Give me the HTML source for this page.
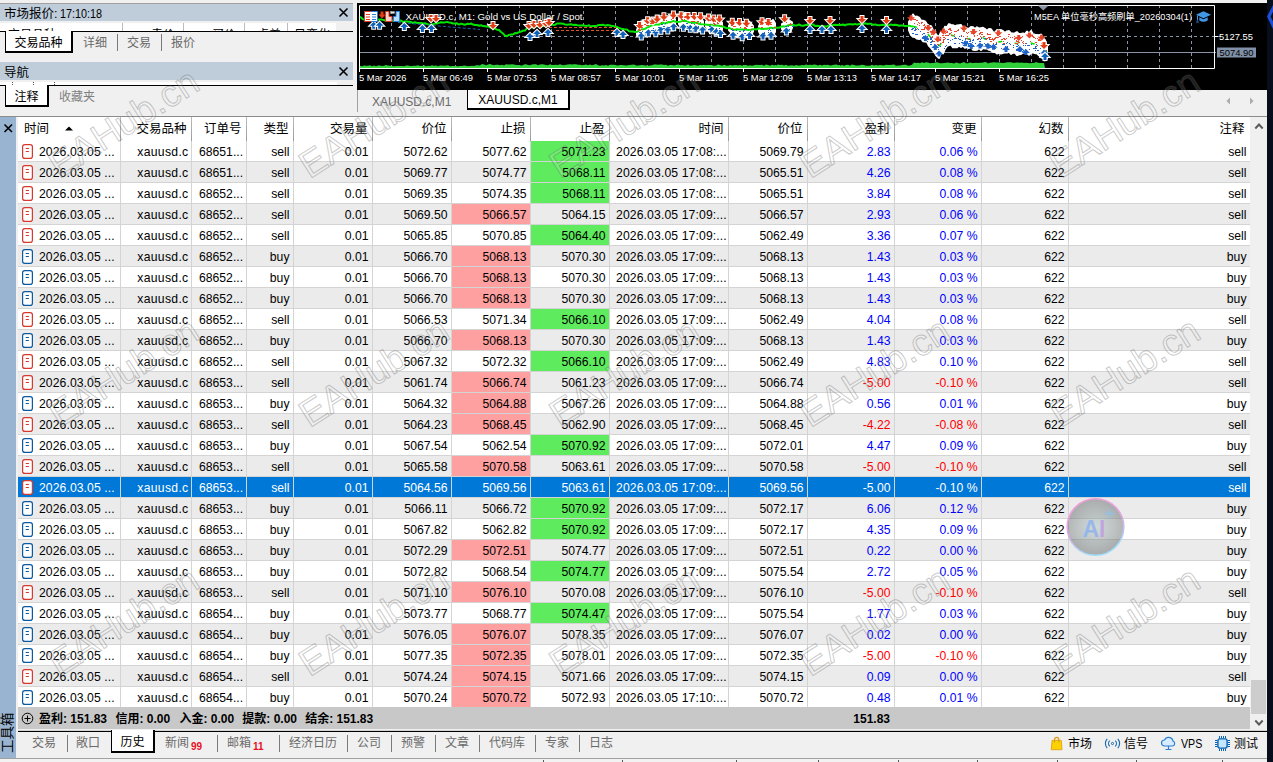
<!DOCTYPE html>
<html lang="zh-CN"><head><meta charset="utf-8"><title>MT5</title>
<style>
*{box-sizing:border-box;margin:0;padding:0}
html,body{width:1273px;height:762px;overflow:hidden;background:#f0f0f0}
body{position:relative;font-family:"Liberation Sans","Noto Sans CJK SC",sans-serif;font-size:12px;color:#000;line-height:1}
.abs{position:absolute}
.t{position:absolute;white-space:nowrap;line-height:20px;height:20px}
.r{text-align:right}
.hd{position:absolute;white-space:nowrap;line-height:22px;height:22px;top:118px;font-size:12.5px}
.row{position:absolute;left:17px;width:1233px;height:21px}
.row .c{position:absolute;top:0;height:20px;line-height:22px;font-size:12.2px;white-space:nowrap;text-align:right;padding-right:3.5px;overflow:hidden}
.row .l{text-align:left;padding-left:0}
.alt{background:#ebebeb}
.sel{background:#0078d7;color:#fff}
.blue{color:#0000ff}.red{color:#ff0000}
.sel .blue,.sel .red{color:#fff}
.g{background:#5eec5e}.rd{background:#ffa0a0}
.vl{position:absolute;width:1px;background:#d4d4d4}
.hl{position:absolute;height:1px;background:#d4d4d4;left:17px;width:1233px}
.tab{position:absolute;color:#6a6a6a;white-space:nowrap;font-size:12px;line-height:16px}
.sep{position:absolute;width:1px;background:#7a7a7a}
.cap{position:absolute;background:#bfcddb;font-size:12.5px;line-height:18px;padding-left:4px;white-space:nowrap}
.nar{display:inline-block;transform:scaleX(.9);transform-origin:left center;font-size:12px}
.x{position:absolute;font-size:12px;font-weight:bold}
.atab{position:absolute;background:#fff;border-left:1px solid #000;border-right:2px solid #000;border-bottom:2px solid #000;color:#000;text-align:center;white-space:nowrap}
</style></head><body>

<div class="abs" style="left:0;top:0;width:1273px;height:3px;background:#f0f0f0"></div>
<div class="abs" style="left:0;top:3px;width:353px;height:1px;background:#a0a0a0"></div>
<div class="cap" style="left:0;top:4px;width:353px;height:17px;line-height:20px">市场报价:<span class="nar">&nbsp;17:10:18</span></div>
<div class="abs" style="left:0;top:23px;width:336px;height:8px;background:#fff;overflow:hidden;font-size:12px;line-height:12px"><div class="abs" style="left:8px;top:6px;white-space:nowrap">交易品种</div><div class="abs" style="right:161px;top:6px;white-space:nowrap">卖价</div><div class="abs" style="right:100px;top:6px;white-space:nowrap">买价</div><div class="abs" style="right:55px;top:6px;white-space:nowrap">点差</div><div class="abs" style="right:6px;top:6px;white-space:nowrap">日变化</div><div class="abs" style="left:122px;top:0;width:1px;height:8px;background:#bdbdbd"></div><div class="abs" style="left:183px;top:0;width:1px;height:8px;background:#bdbdbd"></div><div class="abs" style="left:244px;top:0;width:1px;height:8px;background:#bdbdbd"></div><div class="abs" style="left:287px;top:0;width:1px;height:8px;background:#bdbdbd"></div></div>
<div class="abs" style="left:0;top:31px;width:353px;height:1px;background:#000"></div>
<div class="atab" style="left:5px;top:31px;width:68px;height:22px;line-height:24px;font-size:12px">交易品种</div>
<div class="tab" style="left:83px;top:35px">详细</div><div class="sep" style="left:117px;top:34px;height:17px"></div>
<div class="tab" style="left:127px;top:35px">交易</div><div class="sep" style="left:161px;top:34px;height:17px"></div>
<div class="tab" style="left:171px;top:35px">报价</div>
<div class="cap" style="left:0;top:62px;width:353px;height:18px;line-height:22px">导航</div>
<div class="abs" style="left:0;top:82px;width:337px;height:3px;background:#fff"></div><div class="abs" style="left:12px;top:82px;width:1px;height:1px;background:#555;box-shadow:0 2px 0 #555,21px 0 0 #555,21px 2px 0 #555,42px 0 0 #555,42px 2px 0 #555"></div>
<div class="abs" style="left:0;top:85px;width:353px;height:1px;background:#000"></div>
<div class="atab" style="left:5px;top:85px;width:44px;height:22px;line-height:24px;font-size:12px">注释</div>
<div class="tab" style="left:59px;top:89px;color:#808080">收藏夹</div>
<svg class="abs" style="left:338px;top:7px" width="11" height="11" viewBox="0 0 11 11"><path d="M1.5 1.5 L9.5 9.5 M9.5 1.5 L1.5 9.5" stroke="#000" stroke-width="1.6" fill="none"/></svg>
<svg class="abs" style="left:338px;top:66px" width="11" height="11" viewBox="0 0 11 11"><path d="M1.5 1.5 L9.5 9.5 M9.5 1.5 L1.5 9.5" stroke="#000" stroke-width="1.6" fill="none"/></svg>
<div class="abs" style="left:357px;top:3px;width:910px;height:87px;background:#000"></div>
<svg class="abs" style="left:358px;top:3px" width="909" height="87" viewBox="358 3 909 87" font-family="Liberation Sans, Noto Sans CJK SC, sans-serif">
<path d="M391.5 5 V68" stroke="#8a94a6" stroke-width="1" stroke-dasharray="3 3"/>
<path d="M423.5 5 V68" stroke="#8a94a6" stroke-width="1" stroke-dasharray="3 3"/>
<path d="M455.5 5 V68" stroke="#8a94a6" stroke-width="1" stroke-dasharray="3 3"/>
<path d="M487.5 5 V68" stroke="#8a94a6" stroke-width="1" stroke-dasharray="3 3"/>
<path d="M519.5 5 V68" stroke="#8a94a6" stroke-width="1" stroke-dasharray="3 3"/>
<path d="M551.5 5 V68" stroke="#8a94a6" stroke-width="1" stroke-dasharray="3 3"/>
<path d="M583.5 5 V68" stroke="#8a94a6" stroke-width="1" stroke-dasharray="3 3"/>
<path d="M615.5 5 V68" stroke="#8a94a6" stroke-width="1" stroke-dasharray="3 3"/>
<path d="M647.5 5 V68" stroke="#8a94a6" stroke-width="1" stroke-dasharray="3 3"/>
<path d="M679.5 5 V68" stroke="#8a94a6" stroke-width="1" stroke-dasharray="3 3"/>
<path d="M711.5 5 V68" stroke="#8a94a6" stroke-width="1" stroke-dasharray="3 3"/>
<path d="M743.5 5 V68" stroke="#8a94a6" stroke-width="1" stroke-dasharray="3 3"/>
<path d="M775.5 5 V68" stroke="#8a94a6" stroke-width="1" stroke-dasharray="3 3"/>
<path d="M807.5 5 V68" stroke="#8a94a6" stroke-width="1" stroke-dasharray="3 3"/>
<path d="M839.5 5 V68" stroke="#8a94a6" stroke-width="1" stroke-dasharray="3 3"/>
<path d="M871.5 5 V68" stroke="#8a94a6" stroke-width="1" stroke-dasharray="3 3"/>
<path d="M903.5 5 V68" stroke="#8a94a6" stroke-width="1" stroke-dasharray="3 3"/>
<path d="M935.5 5 V68" stroke="#8a94a6" stroke-width="1" stroke-dasharray="3 3"/>
<path d="M967.5 5 V68" stroke="#8a94a6" stroke-width="1" stroke-dasharray="3 3"/>
<path d="M999.5 5 V68" stroke="#8a94a6" stroke-width="1" stroke-dasharray="3 3"/>
<path d="M1031.5 5 V68" stroke="#8a94a6" stroke-width="1" stroke-dasharray="3 3"/>
<path d="M1063.5 5 V68" stroke="#8a94a6" stroke-width="1" stroke-dasharray="3 3"/>
<path d="M1095.5 5 V68" stroke="#8a94a6" stroke-width="1" stroke-dasharray="3 3"/>
<path d="M1127.5 5 V68" stroke="#8a94a6" stroke-width="1" stroke-dasharray="3 3"/>
<path d="M1159.5 5 V68" stroke="#8a94a6" stroke-width="1" stroke-dasharray="3 3"/>
<path d="M1191.5 5 V68" stroke="#8a94a6" stroke-width="1" stroke-dasharray="3 3"/>
<path d="M360 36.5 H1222" stroke="#8a94a6" stroke-width="1" stroke-dasharray="3 3"/>
<path d="M360 52.5 H1216" stroke="#8a94a6" stroke-width="1"/>
<text x="405.5" y="20" font-size="9.6" fill="#fff" textLength="177" lengthAdjust="spacingAndGlyphs">XAUUSD.c, M1:  Gold vs US Dollar / Spot</text>
<polygon points="637,29.9 639,25.5 641,21.4 643,21.1 645,20.2 647,19.5 649,20.7 651,18.0 653,20.2 655,19.2 657,19.0 659,18.5 661,17.7 663,17.4 665,17.4 667,17.6 669,17.3 671,15.2 673,16.5 675,19.4 675,24.6 673,28.4 671,27.8 669,30.0 667,28.6 665,29.2 663,30.2 661,31.5 659,30.3 657,29.8 655,30.4 653,32.5 651,32.2 649,33.8 647,34.1 645,33.4 643,34.2 641,36.9 639,34.9 637,35.0" fill="#fff" stroke="#fff" stroke-width="2" stroke-linejoin="round"/>
<polygon points="679,18.7 681,14.8 683,14.3 685,12.7 687,13.6 689,14.7 691,16.1 693,17.2 695,15.3 697,17.6 699,15.4 701,17.7 703,21.5 703,26.3 701,28.4 699,31.4 697,28.4 695,28.8 693,27.9 691,27.5 689,28.4 687,29.0 685,27.4 683,28.5 681,26.3 679,24.0" fill="#fff" stroke="#fff" stroke-width="2" stroke-linejoin="round"/>
<polygon points="706,21.6 708,19.3 710,16.5 712,18.3 714,17.2 716,19.8 718,19.9 720,19.7 722,22.7 722,29.8 720,32.2 718,32.9 716,31.0 714,31.7 712,31.1 710,33.3 708,29.2 706,26.5" fill="#fff" stroke="#fff" stroke-width="2" stroke-linejoin="round"/>
<polygon points="729,25.6 731,23.2 733,23.6 735,23.2 737,22.6 739,22.5 741,21.9 743,23.7 745,24.2 747,22.3 749,21.5 751,23.6 753,26.1 753,31.4 751,35.4 749,37.6 747,34.7 745,37.2 743,38.3 741,36.3 739,37.3 737,37.1 735,36.1 733,34.8 731,32.4 729,30.1" fill="#fff" stroke="#fff" stroke-width="2" stroke-linejoin="round"/>
<polygon points="759,26.1 761,22.3 763,20.7 765,20.3 767,20.9 769,23.1 771,21.8 773,19.9 775,23.3 775,31.9 773,34.8 771,33.4 769,33.7 767,34.1 765,35.8 763,35.6 761,34.9 759,31.5" fill="#fff" stroke="#fff" stroke-width="2" stroke-linejoin="round"/>
<polygon points="782,24.1 784,23.0 786,19.3 788,19.6 790,21.1 792,22.3 792,27.8 790,32.0 788,31.8 786,31.6 784,31.7 782,28.9" fill="#fff" stroke="#fff" stroke-width="2" stroke-linejoin="round"/>
<polygon points="909,21.9 911,18.7 913,14.5 915,17.0 917,16.6 919,17.7 921,20.5 923,20.7 925,21.4 927,24.5 929,25.6 931,26.1 933,30.5 935,32.9 937,35.6 939,36.8 941,32.2 943,31.9 945,26.8 947,27.2 949,24.1 951,25.0 953,25.2 955,26.5 957,25.5 959,25.2 961,25.0 963,28.5 965,27.4 967,28.5 969,28.8 971,27.0 973,27.2 975,29.3 977,27.2 979,28.6 981,28.2 983,27.8 985,29.0 987,31.0 989,28.9 991,29.2 993,32.2 995,32.8 997,30.0 999,30.5 1001,30.0 1003,31.2 1005,32.9 1007,31.4 1009,31.1 1011,33.5 1013,33.6 1015,33.1 1017,32.1 1019,34.1 1021,33.9 1023,33.5 1025,34.2 1027,31.5 1029,33.8 1031,31.1 1033,34.2 1035,34.7 1037,35.0 1039,35.3 1041,34.6 1043,38.3 1045,40.2 1047,47.0 1047,58.1 1045,60.4 1043,58.1 1041,57.4 1039,55.2 1037,53.2 1035,53.2 1033,52.3 1031,53.1 1029,54.8 1027,53.4 1025,52.5 1023,52.4 1021,53.9 1019,54.3 1017,55.1 1015,52.4 1013,52.7 1011,53.9 1009,51.3 1007,52.6 1005,52.6 1003,52.7 1001,53.5 999,52.5 997,53.5 995,51.8 993,52.0 991,50.4 989,49.8 987,48.5 985,48.5 983,48.1 981,50.0 979,47.9 977,49.8 975,50.0 973,49.8 971,46.9 969,48.1 967,47.0 965,47.7 963,45.6 961,46.9 959,45.5 957,47.3 955,46.9 953,47.3 951,44.5 949,45.1 947,45.9 945,48.7 943,53.4 941,52.6 939,57.9 937,56.1 935,53.1 933,50.3 931,47.9 929,45.9 927,41.7 925,41.5 923,41.2 921,38.2 919,39.1 917,38.6 915,37.0 913,36.7 911,34.9 909,30.1" fill="#fff" stroke="#fff" stroke-width="2" stroke-linejoin="round"/>
<polyline points="359,16.8 361,17.5 363,19.2 365,19.4 367,20.1 369,19.8 371,19.4 373,20.0 375,19.4 377,19.9 379,19.4 381,19.4 383,19.9 385,20.5 387,19.5 389,19.6 391,20.2 393,20.8 395,20.4 397,20.3 399,21.4 401,20.5 403,22.0 405,21.5 407,21.5 409,21.7 411,22.1 413,23.0 415,22.2 417,22.9 419,23.1 421,22.9 423,23.4 425,23.3 427,24.0 429,24.5 431,24.9 433,24.2 435,23.6 437,23.5 439,22.9 441,22.3 443,22.6 445,22.4 447,21.9 449,22.5 451,22.7 453,23.5 455,23.6 457,23.3 459,24.6 461,23.6 463,24.3 465,24.8 467,23.8 469,24.1 471,23.5 473,24.6 475,25.0 477,25.0 479,25.7 481,25.2 483,26.1 485,26.3 487,26.6 489,26.8 491,27.8 493,28.6 495,28.6 497,29.7 499,29.9 501,32.0 503,33.5 505,35.7 507,36.2 509,34.9 511,34.6 513,34.5 515,33.1 517,33.2 519,32.2 521,31.5 523,30.7 525,30.6 527,28.2 529,27.4 531,27.1 533,27.4 535,26.0 537,26.3 539,26.2 541,26.4 543,26.1 545,25.9 547,24.8 549,24.8 551,24.4 553,24.9 555,24.8 557,23.5 559,23.5 561,23.6 563,23.8 565,24.4 567,24.7 569,24.5 571,24.3 573,24.9 575,24.8 577,25.1 579,25.6 581,25.4 583,25.3 585,25.7 587,25.9 589,25.3 591,26.5 593,26.1 595,26.0 597,25.7 599,24.9 601,25.0 603,24.7 605,25.7 607,25.1 609,25.3 611,25.8 613,26.0 615,26.6 617,26.9 619,27.8 621,28.7 623,28.9 625,29.6 627,29.6 629,31.3 631,31.5 633,31.6 635,32.0 637,31.8 639,30.5 641,29.1 643,29.4 645,28.9 647,27.5 649,26.9 651,25.7 653,25.1 655,24.8 657,24.3 659,24.7 661,23.3 663,22.7 665,23.6 667,22.7 669,21.9 671,22.2 673,21.1 675,21.5 677,22.1 679,21.8 681,21.4 683,20.7 685,21.0 687,21.1 689,22.3 691,22.4 693,23.0 695,22.6 697,22.7 699,23.8 701,24.3 703,24.4 705,24.6 707,24.8 709,25.0 711,24.7 713,25.5 715,25.6 717,25.5 719,25.7 721,26.3 723,26.5 725,27.5 727,28.2 729,27.9 731,28.9 733,29.4 735,29.7 737,29.2 739,29.4 741,29.6 743,29.4 745,29.3 747,29.7 749,30.0 751,29.8 753,29.2 755,29.3 757,29.4 759,28.2 761,28.9 763,29.1 765,28.8 767,28.7 769,28.2 771,27.6 773,28.3 775,27.4 777,27.8 779,27.8 781,26.7 783,26.3 785,26.7 787,26.0 789,25.0 791,24.8 793,24.7 795,25.6 797,25.4 799,24.5 801,25.5 803,25.7 805,25.2 807,24.8 809,25.1 811,24.5 813,24.4 815,26.0 817,25.8 819,25.9 821,26.6 823,25.9 825,26.5 827,26.5 829,25.5 831,25.3 833,25.1 835,24.8 837,25.1 839,24.7 841,24.9 843,24.5 845,25.4 847,24.4 849,24.3 851,24.2 853,24.6 855,23.9 857,24.6 859,24.0 861,24.0 863,24.0 865,23.3 867,23.9 869,23.7 871,23.7 873,25.0 875,24.4 877,25.0 879,25.3 881,25.1 883,24.8 885,25.0 887,25.1 889,25.4 891,24.4 893,25.1 895,24.8 897,25.0 899,25.8 901,25.5 903,25.6 905,25.9 907,26.1 909,25.6 911,26.2 913,26.4" fill="none" stroke="#00e400" stroke-width="2" stroke-linejoin="round"/>
<polyline points="913,26.4 915,26.8 917,27.7 919,28.3 921,29.3 923,30.1 925,31.6 927,33.3 929,35.5 931,37.6 933,39.7 935,43.1 937,45.1 939,46.5 941,43.5 943,41.5 945,38.6 947,36.0 949,35.5 951,34.9 953,35.7 955,35.9 957,36.3 959,35.7 961,37.0 963,37.3 965,37.1 967,38.6 969,39.2 971,38.0 973,39.0 975,38.1 977,38.2 979,38.8 981,38.5 983,37.9 985,38.9 987,39.7 989,40.1 991,40.6 993,41.4 995,42.3 997,41.2 999,41.9 1001,41.6 1003,41.0 1005,41.3 1007,41.7 1009,41.9 1011,41.6 1013,43.2 1015,43.2 1017,43.8 1019,42.9 1021,43.1 1023,42.7 1025,43.7 1027,42.9 1029,42.6 1031,42.9 1033,43.7 1035,43.9 1037,43.5 1039,44.3 1041,46.8 1043,48.3 1045,50.9 1047,52.3" fill="none" stroke="#00e400" stroke-width="1.6" stroke-dasharray="4 13" stroke-linejoin="round"/>
<path d="M398 22.5 L480 29.5" stroke="#1f5fb0" stroke-width="1" stroke-dasharray="3 2"/>
<path d="M549 27.5 H616" stroke="#e0522a" stroke-width="1" stroke-dasharray="3 2"/>
<path d="M556 30.5 H614" stroke="#e0522a" stroke-width="1" stroke-dasharray="3 2"/>
<path d="M372.2 28.7 h3 v-3 h2.5 l-4 -4 l-4 4 h2.5 z" fill="#1060b8" stroke="#fff" stroke-width="2" paint-order="stroke"/>
<path d="M378.1 28.7 h3 v-3 h2.5 l-4 -4 l-4 4 h2.5 z" fill="#1060b8" stroke="#fff" stroke-width="2" paint-order="stroke"/>
<path d="M402.8 30.0 h3 v-3 h2.5 l-4 -4 l-4 4 h2.5 z" fill="#1060b8" stroke="#fff" stroke-width="2" paint-order="stroke"/>
<path d="M420.9 32.0 h3 v-3 h2.5 l-4 -4 l-4 4 h2.5 z" fill="#1060b8" stroke="#fff" stroke-width="2" paint-order="stroke"/>
<path d="M429.9 32.0 h3 v-3 h2.5 l-4 -4 l-4 4 h2.5 z" fill="#1060b8" stroke="#fff" stroke-width="2" paint-order="stroke"/>
<path d="M429.5 15.0 h3 v3 h2.5 l-4 4 l-4 -4 h2.5 z" fill="#e23c14" stroke="#fff" stroke-width="2" paint-order="stroke"/>
<path d="M434.5 15.0 h3 v3 h2.5 l-4 4 l-4 -4 h2.5 z" fill="#e23c14" stroke="#fff" stroke-width="2" paint-order="stroke"/>
<path d="M491.5 22.0 h3 v3 h2.5 l-4 4 l-4 -4 h2.5 z" fill="#e23c14" stroke="#fff" stroke-width="2" paint-order="stroke"/>
<path d="M527.5 22.0 h3 v3 h2.5 l-4 4 l-4 -4 h2.5 z" fill="#e23c14" stroke="#fff" stroke-width="2" paint-order="stroke"/>
<path d="M532.5 21.0 h3 v3 h2.5 l-4 4 l-4 -4 h2.5 z" fill="#e23c14" stroke="#fff" stroke-width="2" paint-order="stroke"/>
<path d="M538.5 21.0 h3 v3 h2.5 l-4 4 l-4 -4 h2.5 z" fill="#e23c14" stroke="#fff" stroke-width="2" paint-order="stroke"/>
<path d="M544.5 20.0 h3 v3 h2.5 l-4 4 l-4 -4 h2.5 z" fill="#e23c14" stroke="#fff" stroke-width="2" paint-order="stroke"/>
<path d="M547.5 19.0 h3 v3 h2.5 l-4 4 l-4 -4 h2.5 z" fill="#e23c14" stroke="#fff" stroke-width="2" paint-order="stroke"/>
<path d="M528.5 40.0 h3 v-3 h2.5 l-4 -4 l-4 4 h2.5 z" fill="#1060b8" stroke="#fff" stroke-width="2" paint-order="stroke"/>
<path d="M535.5 37.0 h3 v-3 h2.5 l-4 -4 l-4 4 h2.5 z" fill="#1060b8" stroke="#fff" stroke-width="2" paint-order="stroke"/>
<path d="M546.5 36.0 h3 v-3 h2.5 l-4 -4 l-4 4 h2.5 z" fill="#1060b8" stroke="#fff" stroke-width="2" paint-order="stroke"/>
<path d="M615.5 36.0 h3 v-3 h2.5 l-4 -4 l-4 4 h2.5 z" fill="#1060b8" stroke="#fff" stroke-width="2" paint-order="stroke"/>
<path d="M621.5 38.0 h3 v-3 h2.5 l-4 -4 l-4 4 h2.5 z" fill="#1060b8" stroke="#fff" stroke-width="2" paint-order="stroke"/>
<path d="M638.1 21.9 h3 v3 h2.5 l-4 4 l-4 -4 h2.5 z" fill="#e23c14" stroke="#fff" stroke-width="2" paint-order="stroke"/>
<path d="M639.8 39.5 h3 v-3 h2.5 l-4 -4 l-4 4 h2.5 z" fill="#1060b8" stroke="#fff" stroke-width="2" paint-order="stroke"/>
<path d="M646.1 17.2 h3 v3 h2.5 l-4 4 l-4 -4 h2.5 z" fill="#e23c14" stroke="#fff" stroke-width="2" paint-order="stroke"/>
<path d="M646.9 36.3 h3 v-3 h2.5 l-4 -4 l-4 4 h2.5 z" fill="#1060b8" stroke="#fff" stroke-width="2" paint-order="stroke"/>
<path d="M651.5 17.5 h3 v3 h2.5 l-4 4 l-4 -4 h2.5 z" fill="#e23c14" stroke="#fff" stroke-width="2" paint-order="stroke"/>
<path d="M654.3 36.2 h3 v-3 h2.5 l-4 -4 l-4 4 h2.5 z" fill="#1060b8" stroke="#fff" stroke-width="2" paint-order="stroke"/>
<path d="M655.7 15.5 h3 v3 h2.5 l-4 4 l-4 -4 h2.5 z" fill="#e23c14" stroke="#fff" stroke-width="2" paint-order="stroke"/>
<path d="M659.4 33.8 h3 v-3 h2.5 l-4 -4 l-4 4 h2.5 z" fill="#1060b8" stroke="#fff" stroke-width="2" paint-order="stroke"/>
<path d="M662.4 13.2 h3 v3 h2.5 l-4 4 l-4 -4 h2.5 z" fill="#e23c14" stroke="#fff" stroke-width="2" paint-order="stroke"/>
<path d="M666.3 33.5 h3 v-3 h2.5 l-4 -4 l-4 4 h2.5 z" fill="#1060b8" stroke="#fff" stroke-width="2" paint-order="stroke"/>
<path d="M671.9 11.6 h3 v3 h2.5 l-4 4 l-4 -4 h2.5 z" fill="#e23c14" stroke="#fff" stroke-width="2" paint-order="stroke"/>
<path d="M672.2 30.3 h3 v-3 h2.5 l-4 -4 l-4 4 h2.5 z" fill="#1060b8" stroke="#fff" stroke-width="2" paint-order="stroke"/>
<rect x="663" y="28" width="2" height="1" fill="#1e64c8"/>
<rect x="641" y="32" width="1" height="1" fill="#1e64c8"/>
<rect x="666" y="20" width="1" height="1" fill="#e8452a"/>
<rect x="661" y="22" width="1" height="1" fill="#e8452a"/>
<rect x="661" y="24" width="2" height="1" fill="#1e64c8"/>
<rect x="663" y="19" width="1" height="1" fill="#e8452a"/>
<rect x="649" y="31" width="1" height="1" fill="#1e64c8"/>
<rect x="652" y="23" width="1" height="1" fill="#e8452a"/>
<rect x="638" y="29" width="2" height="1" fill="#e8452a"/>
<rect x="648" y="25" width="1" height="1" fill="#e8452a"/>
<rect x="655" y="22" width="1" height="1" fill="#e8452a"/>
<rect x="639" y="30" width="2" height="1" fill="#e8452a"/>
<rect x="640" y="27" width="2" height="1" fill="#e8452a"/>
<rect x="641" y="27" width="2" height="1" fill="#e8452a"/>
<rect x="671" y="19" width="1" height="1" fill="#e8452a"/>
<rect x="663" y="26" width="2" height="1" fill="#1e64c8"/>
<rect x="663" y="20" width="2" height="1" fill="#e8452a"/>
<rect x="665" y="23" width="1" height="1" fill="#1e64c8"/>
<rect x="656" y="22" width="1" height="1" fill="#e8452a"/>
<rect x="646" y="25" width="2" height="1" fill="#e8452a"/>
<rect x="642" y="31" width="1" height="1" fill="#1e64c8"/>
<rect x="670" y="22" width="1" height="1" fill="#e8452a"/>
<rect x="672" y="18" width="2" height="1" fill="#e8452a"/>
<rect x="640" y="25" width="1" height="1" fill="#e8452a"/>
<rect x="653" y="28" width="1" height="1" fill="#1e64c8"/>
<rect x="652" y="30" width="2" height="1" fill="#1e64c8"/>
<rect x="664" y="28" width="1" height="1" fill="#1e64c8"/>
<rect x="650" y="23" width="2" height="1" fill="#e8452a"/>
<rect x="639" y="32" width="2" height="1" fill="#1e64c8"/>
<rect x="668" y="27" width="2" height="1" fill="#1e64c8"/>
<rect x="644" y="24" width="2" height="1" fill="#e8452a"/>
<rect x="641" y="29" width="1" height="1" fill="#e8452a"/>
<rect x="658" y="27" width="2" height="1" fill="#1e64c8"/>
<rect x="651" y="30" width="2" height="1" fill="#1e64c8"/>
<path d="M679.7 12.2 h3 v3 h2.5 l-4 4 l-4 -4 h2.5 z" fill="#e23c14" stroke="#fff" stroke-width="2" paint-order="stroke"/>
<path d="M681.9 30.7 h3 v-3 h2.5 l-4 -4 l-4 4 h2.5 z" fill="#1060b8" stroke="#fff" stroke-width="2" paint-order="stroke"/>
<path d="M686.5 13.0 h3 v3 h2.5 l-4 4 l-4 -4 h2.5 z" fill="#e23c14" stroke="#fff" stroke-width="2" paint-order="stroke"/>
<path d="M688.8 31.7 h3 v-3 h2.5 l-4 -4 l-4 4 h2.5 z" fill="#1060b8" stroke="#fff" stroke-width="2" paint-order="stroke"/>
<path d="M692.8 13.0 h3 v3 h2.5 l-4 4 l-4 -4 h2.5 z" fill="#e23c14" stroke="#fff" stroke-width="2" paint-order="stroke"/>
<path d="M694.3 32.2 h3 v-3 h2.5 l-4 -4 l-4 4 h2.5 z" fill="#1060b8" stroke="#fff" stroke-width="2" paint-order="stroke"/>
<path d="M699.1 13.3 h3 v3 h2.5 l-4 4 l-4 -4 h2.5 z" fill="#e23c14" stroke="#fff" stroke-width="2" paint-order="stroke"/>
<path d="M701.1 33.5 h3 v-3 h2.5 l-4 -4 l-4 4 h2.5 z" fill="#1060b8" stroke="#fff" stroke-width="2" paint-order="stroke"/>
<rect x="687" y="26" width="1" height="1" fill="#1e64c8"/>
<rect x="686" y="23" width="2" height="1" fill="#1e64c8"/>
<rect x="700" y="22" width="1" height="1" fill="#e8452a"/>
<rect x="681" y="19" width="2" height="1" fill="#e8452a"/>
<rect x="696" y="23" width="2" height="1" fill="#e8452a"/>
<rect x="697" y="27" width="2" height="1" fill="#1e64c8"/>
<rect x="683" y="21" width="1" height="1" fill="#e8452a"/>
<rect x="698" y="26" width="1" height="1" fill="#1e64c8"/>
<rect x="693" y="21" width="2" height="1" fill="#e8452a"/>
<rect x="690" y="25" width="1" height="1" fill="#1e64c8"/>
<rect x="691" y="21" width="1" height="1" fill="#e8452a"/>
<rect x="685" y="17" width="1" height="1" fill="#e8452a"/>
<rect x="691" y="23" width="1" height="1" fill="#1e64c8"/>
<rect x="702" y="28" width="1" height="1" fill="#1e64c8"/>
<rect x="686" y="17" width="1" height="1" fill="#e8452a"/>
<rect x="689" y="27" width="2" height="1" fill="#1e64c8"/>
<rect x="684" y="17" width="2" height="1" fill="#e8452a"/>
<rect x="694" y="24" width="1" height="1" fill="#1e64c8"/>
<rect x="697" y="21" width="2" height="1" fill="#e8452a"/>
<rect x="692" y="21" width="2" height="1" fill="#e8452a"/>
<rect x="684" y="19" width="1" height="1" fill="#e8452a"/>
<path d="M707.0 14.5 h3 v3 h2.5 l-4 4 l-4 -4 h2.5 z" fill="#e23c14" stroke="#fff" stroke-width="2" paint-order="stroke"/>
<path d="M710.3 33.3 h3 v-3 h2.5 l-4 -4 l-4 4 h2.5 z" fill="#1060b8" stroke="#fff" stroke-width="2" paint-order="stroke"/>
<path d="M712.2 15.4 h3 v3 h2.5 l-4 4 l-4 -4 h2.5 z" fill="#e23c14" stroke="#fff" stroke-width="2" paint-order="stroke"/>
<path d="M714.7 35.6 h3 v-3 h2.5 l-4 -4 l-4 4 h2.5 z" fill="#1060b8" stroke="#fff" stroke-width="2" paint-order="stroke"/>
<path d="M717.9 15.5 h3 v3 h2.5 l-4 4 l-4 -4 h2.5 z" fill="#e23c14" stroke="#fff" stroke-width="2" paint-order="stroke"/>
<path d="M719.0 37.1 h3 v-3 h2.5 l-4 -4 l-4 4 h2.5 z" fill="#1060b8" stroke="#fff" stroke-width="2" paint-order="stroke"/>
<rect x="714" y="24" width="2" height="1" fill="#e8452a"/>
<rect x="710" y="20" width="1" height="1" fill="#e8452a"/>
<rect x="721" y="25" width="1" height="1" fill="#e8452a"/>
<rect x="714" y="23" width="1" height="1" fill="#e8452a"/>
<rect x="709" y="26" width="2" height="1" fill="#1e64c8"/>
<rect x="710" y="24" width="1" height="1" fill="#e8452a"/>
<rect x="708" y="29" width="1" height="1" fill="#1e64c8"/>
<rect x="716" y="28" width="1" height="1" fill="#1e64c8"/>
<rect x="719" y="30" width="2" height="1" fill="#1e64c8"/>
<rect x="717" y="23" width="2" height="1" fill="#e8452a"/>
<rect x="708" y="20" width="2" height="1" fill="#e8452a"/>
<rect x="715" y="21" width="1" height="1" fill="#e8452a"/>
<rect x="719" y="28" width="1" height="1" fill="#1e64c8"/>
<rect x="717" y="22" width="1" height="1" fill="#e8452a"/>
<rect x="713" y="23" width="2" height="1" fill="#e8452a"/>
<path d="M730.8 18.8 h3 v3 h2.5 l-4 4 l-4 -4 h2.5 z" fill="#e23c14" stroke="#fff" stroke-width="2" paint-order="stroke"/>
<path d="M731.6 38.7 h3 v-3 h2.5 l-4 -4 l-4 4 h2.5 z" fill="#1060b8" stroke="#fff" stroke-width="2" paint-order="stroke"/>
<path d="M738.0 19.0 h3 v3 h2.5 l-4 4 l-4 -4 h2.5 z" fill="#e23c14" stroke="#fff" stroke-width="2" paint-order="stroke"/>
<path d="M740.7 40.3 h3 v-3 h2.5 l-4 -4 l-4 4 h2.5 z" fill="#1060b8" stroke="#fff" stroke-width="2" paint-order="stroke"/>
<path d="M744.9 19.8 h3 v3 h2.5 l-4 4 l-4 -4 h2.5 z" fill="#e23c14" stroke="#fff" stroke-width="2" paint-order="stroke"/>
<path d="M748.0 38.9 h3 v-3 h2.5 l-4 -4 l-4 4 h2.5 z" fill="#1060b8" stroke="#fff" stroke-width="2" paint-order="stroke"/>
<rect x="732" y="24" width="2" height="1" fill="#e8452a"/>
<rect x="740" y="27" width="1" height="1" fill="#e8452a"/>
<rect x="731" y="25" width="2" height="1" fill="#e8452a"/>
<rect x="732" y="30" width="2" height="1" fill="#1e64c8"/>
<rect x="746" y="26" width="2" height="1" fill="#e8452a"/>
<rect x="736" y="30" width="1" height="1" fill="#1e64c8"/>
<rect x="732" y="28" width="1" height="1" fill="#e8452a"/>
<rect x="737" y="33" width="1" height="1" fill="#1e64c8"/>
<rect x="751" y="29" width="1" height="1" fill="#e8452a"/>
<rect x="743" y="31" width="1" height="1" fill="#1e64c8"/>
<rect x="750" y="31" width="1" height="1" fill="#1e64c8"/>
<rect x="744" y="33" width="2" height="1" fill="#1e64c8"/>
<rect x="744" y="27" width="2" height="1" fill="#e8452a"/>
<rect x="734" y="26" width="2" height="1" fill="#e8452a"/>
<rect x="751" y="26" width="2" height="1" fill="#e8452a"/>
<rect x="733" y="26" width="1" height="1" fill="#e8452a"/>
<rect x="731" y="29" width="1" height="1" fill="#1e64c8"/>
<rect x="745" y="28" width="2" height="1" fill="#e8452a"/>
<rect x="743" y="30" width="2" height="1" fill="#1e64c8"/>
<rect x="744" y="28" width="1" height="1" fill="#e8452a"/>
<rect x="739" y="31" width="2" height="1" fill="#1e64c8"/>
<path d="M760.5 18.2 h3 v3 h2.5 l-4 4 l-4 -4 h2.5 z" fill="#e23c14" stroke="#fff" stroke-width="2" paint-order="stroke"/>
<path d="M761.5 39.6 h3 v-3 h2.5 l-4 -4 l-4 4 h2.5 z" fill="#1060b8" stroke="#fff" stroke-width="2" paint-order="stroke"/>
<path d="M766.8 19.1 h3 v3 h2.5 l-4 4 l-4 -4 h2.5 z" fill="#e23c14" stroke="#fff" stroke-width="2" paint-order="stroke"/>
<path d="M769.5 38.7 h3 v-3 h2.5 l-4 -4 l-4 4 h2.5 z" fill="#1060b8" stroke="#fff" stroke-width="2" paint-order="stroke"/>
<rect x="766" y="24" width="2" height="1" fill="#e8452a"/>
<rect x="766" y="24" width="2" height="1" fill="#e8452a"/>
<rect x="768" y="30" width="1" height="1" fill="#1e64c8"/>
<rect x="770" y="24" width="2" height="1" fill="#e8452a"/>
<rect x="772" y="28" width="1" height="1" fill="#1e64c8"/>
<rect x="771" y="32" width="1" height="1" fill="#1e64c8"/>
<rect x="760" y="24" width="1" height="1" fill="#e8452a"/>
<rect x="763" y="33" width="2" height="1" fill="#1e64c8"/>
<rect x="764" y="32" width="1" height="1" fill="#1e64c8"/>
<rect x="770" y="30" width="1" height="1" fill="#1e64c8"/>
<rect x="761" y="27" width="2" height="1" fill="#e8452a"/>
<rect x="762" y="33" width="2" height="1" fill="#1e64c8"/>
<rect x="774" y="27" width="2" height="1" fill="#e8452a"/>
<rect x="768" y="32" width="1" height="1" fill="#1e64c8"/>
<rect x="769" y="29" width="1" height="1" fill="#1e64c8"/>
<path d="M783.1 15.2 h3 v3 h2.5 l-4 4 l-4 -4 h2.5 z" fill="#e23c14" stroke="#fff" stroke-width="2" paint-order="stroke"/>
<path d="M784.9 34.5 h3 v-3 h2.5 l-4 -4 l-4 4 h2.5 z" fill="#1060b8" stroke="#fff" stroke-width="2" paint-order="stroke"/>
<rect x="789" y="29" width="1" height="1" fill="#1e64c8"/>
<rect x="790" y="23" width="1" height="1" fill="#e8452a"/>
<rect x="789" y="24" width="2" height="1" fill="#e8452a"/>
<rect x="788" y="26" width="1" height="1" fill="#1e64c8"/>
<rect x="785" y="26" width="2" height="1" fill="#1e64c8"/>
<rect x="790" y="24" width="2" height="1" fill="#e8452a"/>
<rect x="792" y="26" width="2" height="1" fill="#1e64c8"/>
<rect x="786" y="22" width="1" height="1" fill="#e8452a"/>
<rect x="785" y="29" width="1" height="1" fill="#1e64c8"/>
<path d="M808.5 17.0 h3 v3 h2.5 l-4 4 l-4 -4 h2.5 z" fill="#e23c14" stroke="#fff" stroke-width="2" paint-order="stroke"/>
<path d="M808.5 33.0 h3 v-3 h2.5 l-4 -4 l-4 4 h2.5 z" fill="#1060b8" stroke="#fff" stroke-width="2" paint-order="stroke"/>
<path d="M860.5 16.0 h3 v3 h2.5 l-4 4 l-4 -4 h2.5 z" fill="#e23c14" stroke="#fff" stroke-width="2" paint-order="stroke"/>
<path d="M860.5 32.0 h3 v-3 h2.5 l-4 -4 l-4 4 h2.5 z" fill="#1060b8" stroke="#fff" stroke-width="2" paint-order="stroke"/>
<path d="M885.0 17.0 h3 v3 h2.5 l-4 4 l-4 -4 h2.5 z" fill="#e23c14" stroke="#fff" stroke-width="2" paint-order="stroke"/>
<path d="M885.0 33.0 h3 v-3 h2.5 l-4 -4 l-4 4 h2.5 z" fill="#1060b8" stroke="#fff" stroke-width="2" paint-order="stroke"/>
<path d="M828.5 17.0 h3 v3 h2.5 l-4 4 l-4 -4 h2.5 z" fill="#e23c14" stroke="#fff" stroke-width="2" paint-order="stroke"/>
<path d="M820.5 33.0 h3 v-3 h2.5 l-4 -4 l-4 4 h2.5 z" fill="#1060b8" stroke="#fff" stroke-width="2" paint-order="stroke"/>
<path d="M829.5 33.0 h3 v-3 h2.5 l-4 -4 l-4 4 h2.5 z" fill="#1060b8" stroke="#fff" stroke-width="2" paint-order="stroke"/>
<path d="M909.5 15.3 h3 v2 h2.5 l-4 4 l-4 -4 h2.5 z" fill="#e8452a"/>
<path d="M923.9 41.0 h3 v-2 h2.5 l-4 -4 l-4 4 h2.5 z" fill="#1e64c8"/>
<path d="M926.7 25.0 h3 v2 h2.5 l-4 4 l-4 -4 h2.5 z" fill="#e8452a"/>
<path d="M931.8 29.5 h3 v2 h2.5 l-4 4 l-4 -4 h2.5 z" fill="#e8452a"/>
<path d="M933.8 50.0 h3 v-2 h2.5 l-4 -4 l-4 4 h2.5 z" fill="#1e64c8"/>
<path d="M936.3 36.6 h3 v2 h2.5 l-4 4 l-4 -4 h2.5 z" fill="#e8452a"/>
<path d="M937.6 56.5 h3 v-2 h2.5 l-4 -4 l-4 4 h2.5 z" fill="#1e64c8"/>
<path d="M941.9 28.5 h3 v2 h2.5 l-4 4 l-4 -4 h2.5 z" fill="#e8452a"/>
<path d="M962.4 25.5 h3 v2 h2.5 l-4 4 l-4 -4 h2.5 z" fill="#e8452a"/>
<path d="M964.1 46.2 h3 v-2 h2.5 l-4 -4 l-4 4 h2.5 z" fill="#1e64c8"/>
<path d="M969.7 49.1 h3 v-2 h2.5 l-4 -4 l-4 4 h2.5 z" fill="#1e64c8"/>
<path d="M972.1 28.9 h3 v2 h2.5 l-4 4 l-4 -4 h2.5 z" fill="#e8452a"/>
<path d="M978.5 48.6 h3 v-2 h2.5 l-4 -4 l-4 4 h2.5 z" fill="#1e64c8"/>
<path d="M986.4 48.8 h3 v-2 h2.5 l-4 -4 l-4 4 h2.5 z" fill="#1e64c8"/>
<path d="M992.0 49.8 h3 v-2 h2.5 l-4 -4 l-4 4 h2.5 z" fill="#1e64c8"/>
<path d="M996.9 30.3 h3 v2 h2.5 l-4 4 l-4 -4 h2.5 z" fill="#e8452a"/>
<path d="M1004.5 52.1 h3 v-2 h2.5 l-4 -4 l-4 4 h2.5 z" fill="#1e64c8"/>
<path d="M1017.2 34.9 h3 v2 h2.5 l-4 4 l-4 -4 h2.5 z" fill="#e8452a"/>
<path d="M1018.4 52.0 h3 v-2 h2.5 l-4 -4 l-4 4 h2.5 z" fill="#1e64c8"/>
<path d="M1024.4 54.9 h3 v-2 h2.5 l-4 -4 l-4 4 h2.5 z" fill="#1e64c8"/>
<path d="M1027.9 32.6 h3 v2 h2.5 l-4 4 l-4 -4 h2.5 z" fill="#e8452a"/>
<path d="M1040.1 34.7 h3 v2 h2.5 l-4 4 l-4 -4 h2.5 z" fill="#e8452a"/>
<path d="M1042.9 55.6 h3 v-2 h2.5 l-4 -4 l-4 4 h2.5 z" fill="#1e64c8"/>
<rect x="1018" y="42" width="2" height="1" fill="#e8452a"/>
<rect x="1035" y="38" width="1" height="1" fill="#e8452a"/>
<rect x="995" y="37" width="2" height="1" fill="#e8452a"/>
<rect x="914" y="19" width="2" height="1" fill="#e8452a"/>
<rect x="916" y="20" width="2" height="1" fill="#e8452a"/>
<rect x="1014" y="38" width="2" height="1" fill="#e8452a"/>
<rect x="1032" y="36" width="2" height="1" fill="#e8452a"/>
<rect x="1039" y="39" width="1" height="1" fill="#e8452a"/>
<rect x="915" y="34" width="2" height="1" fill="#1e64c8"/>
<rect x="922" y="34" width="1" height="1" fill="#1e64c8"/>
<rect x="924" y="24" width="1" height="1" fill="#e8452a"/>
<rect x="950" y="33" width="1" height="1" fill="#e8452a"/>
<rect x="945" y="35" width="1" height="1" fill="#e8452a"/>
<rect x="1035" y="48" width="1" height="1" fill="#1e64c8"/>
<rect x="1027" y="45" width="1" height="1" fill="#1e64c8"/>
<rect x="914" y="27" width="1" height="1" fill="#1e64c8"/>
<rect x="1007" y="42" width="1" height="1" fill="#1e64c8"/>
<rect x="989" y="37" width="2" height="1" fill="#e8452a"/>
<rect x="938" y="49" width="1" height="1" fill="#1e64c8"/>
<rect x="958" y="29" width="1" height="1" fill="#e8452a"/>
<rect x="1043" y="49" width="2" height="1" fill="#e8452a"/>
<rect x="946" y="45" width="1" height="1" fill="#1e64c8"/>
<rect x="1039" y="40" width="2" height="1" fill="#e8452a"/>
<rect x="1015" y="43" width="2" height="1" fill="#e8452a"/>
<rect x="1018" y="45" width="1" height="1" fill="#1e64c8"/>
<rect x="1037" y="50" width="1" height="1" fill="#1e64c8"/>
<rect x="1032" y="35" width="1" height="1" fill="#e8452a"/>
<rect x="969" y="39" width="2" height="1" fill="#1e64c8"/>
<rect x="942" y="42" width="2" height="1" fill="#e8452a"/>
<rect x="1013" y="45" width="1" height="1" fill="#1e64c8"/>
<rect x="981" y="44" width="2" height="1" fill="#1e64c8"/>
<rect x="1012" y="37" width="1" height="1" fill="#e8452a"/>
<rect x="989" y="34" width="2" height="1" fill="#e8452a"/>
<rect x="943" y="37" width="2" height="1" fill="#e8452a"/>
<rect x="1023" y="45" width="1" height="1" fill="#1e64c8"/>
<rect x="1009" y="43" width="1" height="1" fill="#1e64c8"/>
<rect x="955" y="31" width="2" height="1" fill="#e8452a"/>
<rect x="1046" y="47" width="1" height="1" fill="#e8452a"/>
<rect x="963" y="45" width="2" height="1" fill="#1e64c8"/>
<rect x="951" y="32" width="1" height="1" fill="#e8452a"/>
<rect x="948" y="42" width="1" height="1" fill="#1e64c8"/>
<rect x="965" y="42" width="2" height="1" fill="#1e64c8"/>
<rect x="1044" y="47" width="1" height="1" fill="#e8452a"/>
<rect x="993" y="40" width="1" height="1" fill="#e8452a"/>
<rect x="1006" y="43" width="1" height="1" fill="#1e64c8"/>
<rect x="1002" y="44" width="2" height="1" fill="#1e64c8"/>
<rect x="1006" y="47" width="2" height="1" fill="#1e64c8"/>
<rect x="927" y="32" width="2" height="1" fill="#e8452a"/>
<rect x="923" y="29" width="2" height="1" fill="#e8452a"/>
<rect x="1008" y="36" width="1" height="1" fill="#e8452a"/>
<rect x="972" y="40" width="2" height="1" fill="#1e64c8"/>
<rect x="1001" y="48" width="1" height="1" fill="#1e64c8"/>
<rect x="1017" y="41" width="1" height="1" fill="#e8452a"/>
<rect x="915" y="28" width="1" height="1" fill="#1e64c8"/>
<rect x="981" y="32" width="2" height="1" fill="#e8452a"/>
<rect x="938" y="45" width="1" height="1" fill="#1e64c8"/>
<rect x="981" y="37" width="1" height="1" fill="#e8452a"/>
<rect x="1046" y="46" width="1" height="1" fill="#e8452a"/>
<rect x="1010" y="44" width="1" height="1" fill="#1e64c8"/>
<rect x="948" y="35" width="1" height="1" fill="#1e64c8"/>
<rect x="1035" y="46" width="2" height="1" fill="#1e64c8"/>
<rect x="946" y="32" width="2" height="1" fill="#e8452a"/>
<rect x="1043" y="56" width="1" height="1" fill="#1e64c8"/>
<rect x="939" y="40" width="2" height="1" fill="#e8452a"/>
<rect x="936" y="46" width="1" height="1" fill="#1e64c8"/>
<rect x="958" y="38" width="1" height="1" fill="#1e64c8"/>
<rect x="974" y="35" width="1" height="1" fill="#e8452a"/>
<rect x="1017" y="43" width="1" height="1" fill="#e8452a"/>
<rect x="947" y="35" width="1" height="1" fill="#e8452a"/>
<rect x="1003" y="41" width="1" height="1" fill="#e8452a"/>
<rect x="959" y="39" width="1" height="1" fill="#1e64c8"/>
<rect x="969" y="41" width="1" height="1" fill="#1e64c8"/>
<rect x="931" y="34" width="1" height="1" fill="#e8452a"/>
<rect x="1023" y="50" width="1" height="1" fill="#1e64c8"/>
<rect x="983" y="36" width="2" height="1" fill="#e8452a"/>
<rect x="912" y="33" width="1" height="1" fill="#1e64c8"/>
<rect x="993" y="43" width="1" height="1" fill="#e8452a"/>
<rect x="1016" y="41" width="1" height="1" fill="#e8452a"/>
<rect x="1018" y="38" width="2" height="1" fill="#e8452a"/>
<rect x="1044" y="43" width="2" height="1" fill="#e8452a"/>
<rect x="1018" y="49" width="2" height="1" fill="#1e64c8"/>
<rect x="939" y="39" width="2" height="1" fill="#e8452a"/>
<rect x="1031" y="44" width="1" height="1" fill="#1e64c8"/>
<rect x="1023" y="43" width="1" height="1" fill="#e8452a"/>
<rect x="974" y="33" width="1" height="1" fill="#e8452a"/>
<rect x="933" y="41" width="1" height="1" fill="#1e64c8"/>
<rect x="1025" y="43" width="2" height="1" fill="#e8452a"/>
<rect x="951" y="35" width="2" height="1" fill="#e8452a"/>
<rect x="920" y="31" width="1" height="1" fill="#1e64c8"/>
<rect x="913" y="19" width="1" height="1" fill="#e8452a"/>
<rect x="1021" y="37" width="1" height="1" fill="#e8452a"/>
<rect x="915" y="30" width="1" height="1" fill="#1e64c8"/>
<rect x="923" y="33" width="2" height="1" fill="#1e64c8"/>
<rect x="986" y="46" width="1" height="1" fill="#1e64c8"/>
<rect x="968" y="39" width="1" height="1" fill="#e8452a"/>
<rect x="959" y="36" width="1" height="1" fill="#1e64c8"/>
<rect x="1030" y="41" width="1" height="1" fill="#e8452a"/>
<rect x="1018" y="41" width="1" height="1" fill="#e8452a"/>
<rect x="927" y="41" width="1" height="1" fill="#1e64c8"/>
<rect x="965" y="38" width="2" height="1" fill="#1e64c8"/>
<rect x="917" y="24" width="1" height="1" fill="#e8452a"/>
<rect x="1023" y="43" width="1" height="1" fill="#e8452a"/>
<rect x="1018" y="50" width="2" height="1" fill="#1e64c8"/>
<rect x="930" y="39" width="2" height="1" fill="#1e64c8"/>
<rect x="921" y="22" width="2" height="1" fill="#e8452a"/>
<rect x="1014" y="36" width="1" height="1" fill="#e8452a"/>
<rect x="968" y="32" width="1" height="1" fill="#e8452a"/>
<rect x="961" y="42" width="2" height="1" fill="#1e64c8"/>
<rect x="1007" y="47" width="1" height="1" fill="#1e64c8"/>
<rect x="954" y="34" width="1" height="1" fill="#e8452a"/>
<rect x="978" y="39" width="1" height="1" fill="#e8452a"/>
<rect x="989" y="47" width="1" height="1" fill="#1e64c8"/>
<rect x="1003" y="43" width="2" height="1" fill="#e8452a"/>
<rect x="1044" y="49" width="1" height="1" fill="#e8452a"/>
<rect x="921" y="29" width="2" height="1" fill="#e8452a"/>
<rect x="912" y="18" width="1" height="1" fill="#e8452a"/>
<rect x="1045" y="57" width="1" height="1" fill="#1e64c8"/>
<rect x="928" y="26" width="1" height="1" fill="#e8452a"/>
<rect x="972" y="42" width="1" height="1" fill="#1e64c8"/>
<rect x="1016" y="46" width="2" height="1" fill="#1e64c8"/>
<rect x="1014" y="39" width="1" height="1" fill="#e8452a"/>
<rect x="973" y="45" width="1" height="1" fill="#1e64c8"/>
<rect x="1008" y="34" width="2" height="1" fill="#e8452a"/>
<rect x="1004" y="44" width="1" height="1" fill="#1e64c8"/>
<rect x="1010" y="37" width="1" height="1" fill="#e8452a"/>
<rect x="993" y="39" width="2" height="1" fill="#e8452a"/>
<rect x="970" y="41" width="1" height="1" fill="#1e64c8"/>
<rect x="960" y="39" width="1" height="1" fill="#1e64c8"/>
<rect x="975" y="43" width="1" height="1" fill="#1e64c8"/>
<rect x="1017" y="44" width="1" height="1" fill="#1e64c8"/>
<rect x="995" y="44" width="2" height="1" fill="#1e64c8"/>
<rect x="955" y="37" width="1" height="1" fill="#e8452a"/>
<rect x="992" y="38" width="1" height="1" fill="#e8452a"/>
<rect x="962" y="40" width="1" height="1" fill="#1e64c8"/>
<rect x="1021" y="40" width="1" height="1" fill="#e8452a"/>
<rect x="947" y="31" width="1" height="1" fill="#e8452a"/>
<rect x="950" y="30" width="2" height="1" fill="#e8452a"/>
<rect x="930" y="44" width="2" height="1" fill="#1e64c8"/>
<rect x="1004" y="48" width="1" height="1" fill="#1e64c8"/>
<rect x="984" y="38" width="2" height="1" fill="#1e64c8"/>
<rect x="1038" y="40" width="2" height="1" fill="#e8452a"/>
<rect x="964" y="41" width="2" height="1" fill="#1e64c8"/>
<rect x="1013" y="47" width="1" height="1" fill="#1e64c8"/>
<rect x="983" y="36" width="1" height="1" fill="#e8452a"/>
<rect x="989" y="47" width="2" height="1" fill="#1e64c8"/>
<rect x="954" y="36" width="1" height="1" fill="#1e64c8"/>
<rect x="936" y="39" width="1" height="1" fill="#e8452a"/>
<rect x="989" y="38" width="1" height="1" fill="#e8452a"/>
<rect x="944" y="48" width="1" height="1" fill="#1e64c8"/>
<rect x="961" y="36" width="1" height="1" fill="#1e64c8"/>
<rect x="992" y="39" width="1" height="1" fill="#e8452a"/>
<rect x="923" y="25" width="2" height="1" fill="#e8452a"/>
<rect x="977" y="39" width="1" height="1" fill="#1e64c8"/>
<rect x="968" y="45" width="2" height="1" fill="#1e64c8"/>
<rect x="1042" y="43" width="1" height="1" fill="#e8452a"/>
<rect x="1046" y="50" width="1" height="1" fill="#e8452a"/>
<rect x="986" y="45" width="1" height="1" fill="#1e64c8"/>
<rect x="1028" y="45" width="2" height="1" fill="#1e64c8"/>
<rect x="1041" y="43" width="2" height="1" fill="#e8452a"/>
<rect x="922" y="37" width="1" height="1" fill="#1e64c8"/>
<rect x="971" y="33" width="2" height="1" fill="#e8452a"/>
<rect x="940" y="37" width="1" height="1" fill="#e8452a"/>
<rect x="918" y="29" width="1" height="1" fill="#1e64c8"/>
<rect x="945" y="38" width="1" height="1" fill="#e8452a"/>
<rect x="918" y="22" width="1" height="1" fill="#e8452a"/>
<rect x="1003" y="38" width="2" height="1" fill="#e8452a"/>
<rect x="924" y="28" width="1" height="1" fill="#e8452a"/>
<rect x="961" y="35" width="1" height="1" fill="#e8452a"/>
<rect x="1035" y="50" width="1" height="1" fill="#1e64c8"/>
<rect x="1019" y="38" width="1" height="1" fill="#e8452a"/>
<rect x="1038" y="50" width="1" height="1" fill="#1e64c8"/>
<rect x="1017" y="50" width="1" height="1" fill="#1e64c8"/>
<rect x="1025" y="45" width="1" height="1" fill="#1e64c8"/>
<rect x="954" y="31" width="1" height="1" fill="#e8452a"/>
<rect x="930" y="31" width="2" height="1" fill="#e8452a"/>
<rect x="972" y="45" width="1" height="1" fill="#1e64c8"/>
<rect x="946" y="35" width="1" height="1" fill="#e8452a"/>
<rect x="988" y="37" width="1" height="1" fill="#e8452a"/>
<rect x="977" y="35" width="1" height="1" fill="#e8452a"/>
<rect x="931" y="37" width="2" height="1" fill="#e8452a"/>
<rect x="1037" y="45" width="1" height="1" fill="#e8452a"/>
<rect x="945" y="33" width="1" height="1" fill="#e8452a"/>
<rect x="1047" y="59" width="1" height="1" fill="#1e64c8"/>
<rect x="967" y="33" width="1" height="1" fill="#e8452a"/>
<rect x="930" y="38" width="2" height="1" fill="#1e64c8"/>
<rect x="957" y="30" width="2" height="1" fill="#e8452a"/>
<rect x="949" y="34" width="1" height="1" fill="#e8452a"/>
<rect x="940" y="46" width="1" height="1" fill="#1e64c8"/>
<rect x="981" y="34" width="2" height="1" fill="#e8452a"/>
<rect x="921" y="23" width="1" height="1" fill="#e8452a"/>
<rect x="1014" y="38" width="2" height="1" fill="#e8452a"/>
<rect x="1007" y="46" width="1" height="1" fill="#1e64c8"/>
<rect x="911" y="29" width="2" height="1" fill="#1e64c8"/>
<rect x="1036" y="44" width="1" height="1" fill="#1e64c8"/>
<rect x="1025" y="49" width="1" height="1" fill="#1e64c8"/>
<rect x="966" y="42" width="2" height="1" fill="#1e64c8"/>
<rect x="946" y="32" width="1" height="1" fill="#e8452a"/>
<rect x="915" y="30" width="1" height="1" fill="#1e64c8"/>
<rect x="959" y="43" width="1" height="1" fill="#1e64c8"/>
<rect x="927" y="36" width="1" height="1" fill="#1e64c8"/>
<rect x="1017" y="49" width="1" height="1" fill="#1e64c8"/>
<rect x="950" y="29" width="1" height="1" fill="#e8452a"/>
<rect x="980" y="39" width="1" height="1" fill="#1e64c8"/>
<rect x="943" y="35" width="1" height="1" fill="#e8452a"/>
<rect x="924" y="27" width="1" height="1" fill="#e8452a"/>
<rect x="913" y="33" width="1" height="1" fill="#1e64c8"/>
<rect x="912" y="28" width="2" height="1" fill="#1e64c8"/>
<rect x="943" y="41" width="1" height="1" fill="#e8452a"/>
<rect x="1008" y="34" width="1" height="1" fill="#e8452a"/>
<rect x="990" y="45" width="1" height="1" fill="#1e64c8"/>
<rect x="966" y="32" width="1" height="1" fill="#e8452a"/>
<rect x="930" y="37" width="1" height="1" fill="#1e64c8"/>
<rect x="1040" y="38" width="2" height="1" fill="#e8452a"/>
<rect x="968" y="44" width="1" height="1" fill="#1e64c8"/>
<rect x="1043" y="41" width="1" height="1" fill="#e8452a"/>
<rect x="943" y="39" width="2" height="1" fill="#e8452a"/>
<rect x="1020" y="50" width="2" height="1" fill="#1e64c8"/>
<rect x="917" y="28" width="1" height="1" fill="#e8452a"/>
<rect x="944" y="39" width="1" height="1" fill="#e8452a"/>
<rect x="925" y="26" width="1" height="1" fill="#e8452a"/>
<rect x="979" y="30" width="1" height="1" fill="#e8452a"/>
<rect x="1016" y="50" width="1" height="1" fill="#1e64c8"/>
<rect x="915" y="29" width="2" height="1" fill="#1e64c8"/>
<rect x="995" y="44" width="1" height="1" fill="#1e64c8"/>
<rect x="995" y="38" width="1" height="1" fill="#e8452a"/>
<rect x="942" y="35" width="1" height="1" fill="#e8452a"/>
<rect x="999" y="36" width="2" height="1" fill="#e8452a"/>
<rect x="1033" y="37" width="1" height="1" fill="#e8452a"/>
<rect x="970" y="39" width="1" height="1" fill="#e8452a"/>
<rect x="989" y="37" width="2" height="1" fill="#e8452a"/>
<rect x="985" y="44" width="2" height="1" fill="#1e64c8"/>
<rect x="940" y="43" width="1" height="1" fill="#e8452a"/>
<rect x="973" y="39" width="1" height="1" fill="#1e64c8"/>
<rect x="1022" y="36" width="1" height="1" fill="#e8452a"/>
<rect x="980" y="36" width="1" height="1" fill="#e8452a"/>
<rect x="1037" y="38" width="1" height="1" fill="#e8452a"/>
<rect x="986" y="39" width="1" height="1" fill="#1e64c8"/>
<rect x="950" y="40" width="1" height="1" fill="#1e64c8"/>
<rect x="993" y="39" width="2" height="1" fill="#e8452a"/>
<rect x="963" y="36" width="1" height="1" fill="#e8452a"/>
<rect x="981" y="46" width="1" height="1" fill="#1e64c8"/>
<rect x="967" y="41" width="1" height="1" fill="#1e64c8"/>
<rect x="994" y="48" width="2" height="1" fill="#1e64c8"/>
<rect x="923" y="36" width="1" height="1" fill="#1e64c8"/>
<rect x="947" y="39" width="2" height="1" fill="#1e64c8"/>
<rect x="927" y="39" width="2" height="1" fill="#1e64c8"/>
<rect x="990" y="41" width="2" height="1" fill="#e8452a"/>
<rect x="930" y="42" width="2" height="1" fill="#1e64c8"/>
<rect x="993" y="40" width="1" height="1" fill="#e8452a"/>
<rect x="949" y="33" width="2" height="1" fill="#e8452a"/>
<rect x="986" y="38" width="2" height="1" fill="#e8452a"/>
<rect x="1026" y="43" width="1" height="1" fill="#1e64c8"/>
<rect x="984" y="43" width="1" height="1" fill="#1e64c8"/>
<rect x="990" y="34" width="1" height="1" fill="#e8452a"/>
<rect x="1043" y="50" width="1" height="1" fill="#1e64c8"/>
<rect x="938" y="44" width="1" height="1" fill="#e8452a"/>
<rect x="914" y="23" width="1" height="1" fill="#e8452a"/>
<rect x="1036" y="48" width="1" height="1" fill="#1e64c8"/>
<rect x="981" y="38" width="1" height="1" fill="#e8452a"/>
<rect x="974" y="31" width="1" height="1" fill="#e8452a"/>
<rect x="1040" y="48" width="1" height="1" fill="#1e64c8"/>
<rect x="966" y="38" width="2" height="1" fill="#e8452a"/>
<rect x="931" y="32" width="1" height="1" fill="#e8452a"/>
<rect x="970" y="40" width="1" height="1" fill="#1e64c8"/>
<rect x="1005" y="46" width="1" height="1" fill="#1e64c8"/>
<rect x="954" y="43" width="2" height="1" fill="#1e64c8"/>
<rect x="934" y="44" width="1" height="1" fill="#1e64c8"/>
<rect x="1022" y="51" width="1" height="1" fill="#1e64c8"/>
<rect x="996" y="42" width="1" height="1" fill="#e8452a"/>
<rect x="979" y="33" width="2" height="1" fill="#e8452a"/>
<rect x="987" y="34" width="2" height="1" fill="#e8452a"/>
<rect x="997" y="35" width="1" height="1" fill="#e8452a"/>
<rect x="952" y="39" width="1" height="1" fill="#1e64c8"/>
<rect x="964" y="31" width="1" height="1" fill="#e8452a"/>
<rect x="937" y="44" width="1" height="1" fill="#e8452a"/>
<rect x="1029" y="49" width="1" height="1" fill="#1e64c8"/>
<rect x="989" y="39" width="1" height="1" fill="#1e64c8"/>
<rect x="981" y="38" width="1" height="1" fill="#1e64c8"/>
<rect x="933" y="41" width="2" height="1" fill="#e8452a"/>
<rect x="969" y="43" width="2" height="1" fill="#1e64c8"/>
<rect x="1016" y="40" width="1" height="1" fill="#e8452a"/>
<rect x="948" y="29" width="2" height="1" fill="#e8452a"/>
<rect x="919" y="23" width="1" height="1" fill="#e8452a"/>
<rect x="917" y="34" width="1" height="1" fill="#1e64c8"/>
<rect x="970" y="40" width="1" height="1" fill="#1e64c8"/>
<rect x="932" y="40" width="1" height="1" fill="#1e64c8"/>
<rect x="1033" y="48" width="2" height="1" fill="#1e64c8"/>
<rect x="945" y="46" width="1" height="1" fill="#1e64c8"/>
<rect x="943" y="40" width="1" height="1" fill="#e8452a"/>
<rect x="967" y="36" width="1" height="1" fill="#e8452a"/>
<rect x="1019" y="39" width="1" height="1" fill="#e8452a"/>
<rect x="962" y="29" width="1" height="1" fill="#e8452a"/>
<rect x="987" y="33" width="1" height="1" fill="#e8452a"/>
<rect x="956" y="38" width="1" height="1" fill="#1e64c8"/>
<rect x="1023" y="41" width="1" height="1" fill="#e8452a"/>
<rect x="974" y="36" width="1" height="1" fill="#e8452a"/>
<rect x="1001" y="39" width="2" height="1" fill="#e8452a"/>
<rect x="928" y="29" width="1" height="1" fill="#e8452a"/>
<rect x="986" y="39" width="1" height="1" fill="#e8452a"/>
<rect x="932" y="36" width="1" height="1" fill="#e8452a"/>
<rect x="996" y="43" width="1" height="1" fill="#1e64c8"/>
<rect x="979" y="34" width="1" height="1" fill="#e8452a"/>
<rect x="1039" y="53" width="1" height="1" fill="#1e64c8"/>
<rect x="990" y="39" width="2" height="1" fill="#e8452a"/>
<rect x="980" y="32" width="2" height="1" fill="#e8452a"/>
<rect x="980" y="39" width="1" height="1" fill="#1e64c8"/>
<rect x="914" y="30" width="1" height="1" fill="#1e64c8"/>
<rect x="963" y="31" width="1" height="1" fill="#e8452a"/>
<rect x="954" y="38" width="2" height="1" fill="#1e64c8"/>
<rect x="1035" y="48" width="1" height="1" fill="#1e64c8"/>
<rect x="919" y="25" width="1" height="1" fill="#e8452a"/>
<rect x="1022" y="42" width="1" height="1" fill="#e8452a"/>
<rect x="1016" y="49" width="1" height="1" fill="#1e64c8"/>
<rect x="1038" y="39" width="2" height="1" fill="#e8452a"/>
<rect x="1005" y="48" width="2" height="1" fill="#1e64c8"/>
<rect x="1006" y="38" width="1" height="1" fill="#e8452a"/>
<rect x="1034" y="37" width="1" height="1" fill="#e8452a"/>
<rect x="1035" y="47" width="1" height="1" fill="#1e64c8"/>
<rect x="965" y="39" width="1" height="1" fill="#1e64c8"/>
<rect x="931" y="41" width="2" height="1" fill="#1e64c8"/>
<rect x="997" y="37" width="2" height="1" fill="#e8452a"/>
<rect x="978" y="38" width="2" height="1" fill="#e8452a"/>
<rect x="1004" y="39" width="2" height="1" fill="#e8452a"/>
<rect x="949" y="28" width="2" height="1" fill="#e8452a"/>
<rect x="1005" y="49" width="1" height="1" fill="#1e64c8"/>
<rect x="1018" y="39" width="2" height="1" fill="#e8452a"/>
<rect x="1035" y="42" width="2" height="1" fill="#e8452a"/>
<rect x="994" y="38" width="1" height="1" fill="#e8452a"/>
<rect x="1040" y="44" width="2" height="1" fill="#e8452a"/>
<rect x="979" y="41" width="2" height="1" fill="#1e64c8"/>
<path d="M1042.5 42.0 h3 v3 h2.5 l-4 4 l-4 -4 h2.5 z" fill="#e23c14" stroke="#fff" stroke-width="2" paint-order="stroke"/>
<path d="M1043.5 60.0 h3 v-3 h2.5 l-4 -4 l-4 4 h2.5 z" fill="#1060b8" stroke="#fff" stroke-width="2" paint-order="stroke"/>
<polygon points="360,68 360,65.8 362,66.3 364,65.5 366,65.8 368,65.7 370,65.2 372,66.2 374,65.4 376,66.3 378,65.5 380,65.4 382,66.1 384,65.7 386,65.1 388,65.6 390,65.7 392,66.1 394,66.3 396,65.9 398,65.9 400,66.1 402,66.0 404,66.2 406,65.5 408,65.5 410,66.1 412,66.1 414,65.7 416,65.8 418,65.2 420,65.9 422,66.0 424,65.2 426,66.2 428,65.7 430,66.0 432,65.3 434,65.7 436,65.4 438,66.2 440,65.5 442,65.6 444,65.8 446,65.4 448,65.3 450,66.3 452,66.0 454,65.9 456,66.1 458,66.3 460,66.0 462,66.1 464,65.5 466,65.8 468,66.3 470,66.0 472,65.8 474,65.9 476,65.2 478,65.3 480,65.4 482,64.1 484,64.4 486,65.3 488,64.5 490,64.1 492,64.7 494,65.3 496,64.8 498,64.8 500,65.2 502,64.7 504,65.4 506,64.2 508,64.6 510,64.6 512,64.2 514,64.6 516,65.1 518,65.1 520,65.2 522,65.4 524,64.4 526,64.3 528,65.0 530,65.2 532,64.6 534,64.3 536,64.2 538,65.2 540,64.4 542,64.3 544,64.4 546,65.0 548,65.2 550,64.3 552,65.0 554,64.9 556,64.7 558,64.9 560,64.3 562,65.1 564,65.3 566,64.7 568,64.6 570,64.3 572,64.5 574,64.2 576,64.2 578,64.8 580,64.8 582,65.2 584,65.0 586,64.6 588,65.3 590,64.5 592,65.2 594,64.8 596,64.1 598,65.3 600,65.7 602,65.2 604,65.6 606,64.9 608,65.8 610,64.7 612,64.7 614,64.8 616,65.2 618,65.4 620,64.9 622,65.1 624,65.3 626,65.4 628,65.2 630,64.9 632,64.7 634,64.6 636,65.6 638,65.4 640,65.2 642,65.1 644,65.3 646,65.5 648,65.7 650,65.4 652,65.2 654,64.5 656,64.6 658,64.7 660,64.5 662,64.5 664,65.0 666,64.7 668,65.7 670,64.9 672,65.0 674,65.4 676,65.1 678,64.6 680,65.2 682,65.0 684,65.4 686,65.4 688,64.6 690,65.8 692,65.6 694,64.9 696,65.2 698,65.7 700,64.9 702,65.3 704,65.0 706,65.3 708,65.1 710,65.1 712,65.3 714,65.7 716,65.6 718,64.6 720,65.1 722,65.7 724,64.7 726,65.5 728,65.7 730,65.1 732,65.5 734,65.2 736,65.1 738,65.5 740,65.1 742,65.7 744,65.1 746,65.0 748,65.7 750,65.3 752,65.7 754,65.2 756,64.7 758,65.1 760,64.9 762,64.8 764,65.7 766,64.5 768,64.9 770,65.7 772,64.7 774,65.3 776,65.6 778,64.6 780,65.1 782,64.8 784,65.6 786,64.8 788,65.7 790,65.5 792,65.3 794,65.8 796,65.0 798,65.5 800,65.4 802,64.9 804,65.2 806,64.6 808,65.0 810,64.7 812,65.1 814,64.6 816,64.7 818,65.6 820,64.8 822,65.4 824,64.8 826,64.9 828,64.7 830,65.6 832,65.3 834,64.8 836,64.6 838,64.9 840,65.7 842,65.0 844,65.7 846,65.1 848,64.8 850,65.7 852,64.6 854,64.9 856,65.5 858,65.5 860,65.2 862,64.7 864,65.0 866,65.7 868,65.8 870,65.7 872,64.8 874,65.6 876,65.1 878,65.4 880,64.9 882,65.3 884,65.6 886,64.7 888,65.1 890,64.9 892,64.7 894,64.6 896,65.8 898,65.4 900,65.6 902,65.1 904,64.7 906,64.8 908,65.8 910,65.6 912,64.7 914,62.5 916,62.9 918,62.8 920,63.2 922,62.3 924,62.9 926,62.3 928,62.6 930,63.3 932,63.0 934,63.1 936,62.2 938,62.6 940,63.3 942,63.2 944,62.9 946,62.8 948,62.6 950,62.9 952,62.9 954,63.4 956,62.6 958,63.0 960,63.4 962,62.8 964,62.1 966,63.3 968,63.2 970,62.5 972,63.0 974,63.0 976,62.7 978,63.1 980,62.7 982,62.7 984,62.2 986,62.1 988,63.4 990,62.7 992,62.4 994,62.3 996,62.4 998,62.6 1000,62.6 1002,62.9 1004,63.0 1006,62.4 1008,62.3 1010,62.2 1012,62.5 1014,63.0 1016,62.4 1018,62.4 1020,62.7 1022,62.6 1024,62.9 1026,62.7 1028,62.9 1030,63.3 1032,63.0 1034,63.0 1036,62.1 1038,62.8 1040,62.9 1042,63.1 1044,63.1 1045,68" fill="#2fd03a"/>
<path d="M359.5 5.5 H1214.5 V68.5 H359.5 Z" fill="none" stroke="#fff" stroke-width="1"/>
<path d="M359.5 68 V72" stroke="#fff" stroke-width="1"/>
<path d="M423.5 68 V72" stroke="#fff" stroke-width="1"/>
<path d="M487.5 68 V72" stroke="#fff" stroke-width="1"/>
<path d="M551.5 68 V72" stroke="#fff" stroke-width="1"/>
<path d="M615.5 68 V72" stroke="#fff" stroke-width="1"/>
<path d="M679.5 68 V72" stroke="#fff" stroke-width="1"/>
<path d="M743.5 68 V72" stroke="#fff" stroke-width="1"/>
<path d="M807.5 68 V72" stroke="#fff" stroke-width="1"/>
<path d="M871.5 68 V72" stroke="#fff" stroke-width="1"/>
<path d="M935.5 68 V72" stroke="#fff" stroke-width="1"/>
<path d="M999.5 68 V72" stroke="#fff" stroke-width="1"/>
<text x="359" y="81" font-size="9.4" fill="#fff">5 Mar 2026</text>
<text x="423" y="81" font-size="9.4" fill="#fff">5 Mar 06:49</text>
<text x="487" y="81" font-size="9.4" fill="#fff">5 Mar 07:53</text>
<text x="551" y="81" font-size="9.4" fill="#fff">5 Mar 08:57</text>
<text x="615" y="81" font-size="9.4" fill="#fff">5 Mar 10:01</text>
<text x="679" y="81" font-size="9.4" fill="#fff">5 Mar 11:05</text>
<text x="743" y="81" font-size="9.4" fill="#fff">5 Mar 12:09</text>
<text x="807" y="81" font-size="9.4" fill="#fff">5 Mar 13:13</text>
<text x="871" y="81" font-size="9.4" fill="#fff">5 Mar 14:17</text>
<text x="935" y="81" font-size="9.4" fill="#fff">5 Mar 15:21</text>
<text x="999" y="81" font-size="9.4" fill="#fff">5 Mar 16:25</text>
<rect x="364.5" y="11.5" width="13" height="10" fill="#fff"/><path d="M371 11.5 H364.5 V21.5 H371" fill="none" stroke="#e03a1e" stroke-width="1"/><path d="M371 11.5 H377.5 V21.5 H371" fill="none" stroke="#2a7fd8" stroke-width="1"/><path d="M366 14.500h4M366 17h4M366 19.500h4" stroke="#e03a1e" stroke-width="1"/><path d="M372 14.500h4M372 17h4M372 19.500h4" stroke="#2a7fd8" stroke-width="1"/>
<path d="M380.500 11.500 h3 v3 h2 l-3.500 4 l-3.500 -4 h2 z" fill="#e23c14"/>
<path d="M385.500 11.500 h3.500 v5 h3 v5 h-6.500 z" fill="#ffd2ca" stroke="#e03a1e" stroke-width="1"/>
<rect x="390.500" y="11.500" width="4" height="2" fill="#e8e8e8" stroke="#9a9a9a" stroke-width=".6"/>
<path d="M399.500 11.500 h-3.500 v5 h-2.500 v5 h6 z" fill="#b8dcff" stroke="#2a7fd8" stroke-width="1"/>
<text x="1034" y="20" font-size="9.6" fill="#fff" textLength="158" lengthAdjust="spacingAndGlyphs">M5EA 单位毫秒高频刷单_20260304(1)</text>
<path d="M1038 5.500 h10.500 l-5.250 5 z" fill="#8a94a6"/>
<path d="M1203.500 11.300 l7.500 3.500 l-7.500 3.500 l-7.500 -3.500 z" fill="#3f97e6"/><path d="M1199.300 17.300 v3.200 q4.200 2.400 8.400 0 v-3.200 l-4.200 2 z" fill="#3f97e6"/><path d="M1197.500 15.500 v5" stroke="#3f97e6" stroke-width="1"/><path d="M1196.300 20.800 l2.400 2.400 m0 -2.400 l-2.400 2.400" stroke="#2a7fd0" stroke-width=".8"/>
<path d="M1214 36.5 h4" stroke="#fff"/>
<text x="1219" y="40" font-size="9.4" fill="#fff">5127.55</text>
<rect x="1217" y="47.500" width="39" height="10" fill="#8090a8"/>
<text x="1219.500" y="56" font-size="9.4" fill="#000">5074.90</text>
</svg>
<div class="abs" style="left:357px;top:90px;width:1px;height:22px;background:#a0a0a0"></div>
<div class="tab" style="left:372px;top:93.5px;font-size:12px;color:#6a6a6a">XAUUSD.c,M1</div>
<div class="atab" style="left:467px;top:90px;width:103px;height:20px;line-height:21px;font-size:12px">XAUUSD.c,M1</div>
<svg class="abs" style="left:1220px;top:95px" width="40" height="12" viewBox="0 0 40 12"><path d="M10 2.500 L10 9.500 L6.500 6 Z M30 2.500 L30 9.500 L33.500 6 Z" fill="#ababab"/></svg>
<div class="abs" style="left:1267px;top:0;width:6px;height:762px;background:#050e1a"></div>
<svg class="abs" style="left:1267px;top:0" width="6" height="40" viewBox="0 0 6 40"><rect width="6" height="40" fill="#050e1a"/><path d="M7.500 5.500 L1.800 16.500 L7.500 28.500" fill="none" stroke="#1c4fd6" stroke-width="3.200" stroke-linejoin="round"/></svg>
<div class="abs" style="left:0;top:116px;width:1267px;height:1px;background:#8c8c8c"></div>
<div class="abs" style="left:0;top:117px;width:16px;height:641px;background:#99b4d1"></div>
<div class="abs" style="left:16px;top:117px;width:1234px;height:591px;background:#fff"></div>
<svg class="abs" style="left:3px;top:123px" width="11" height="11" viewBox="0 0 11 11"><path d="M1.5 1.5 L9 9 M9 1.5 L1.5 9" stroke="#000" stroke-width="1.6" fill="none"/></svg>
<div class="abs" style="left:-12px;top:724.5px;width:40px;height:16px;line-height:16px;font-size:13.5px;transform:rotate(-90deg);transform-origin:center;text-align:center;white-space:nowrap">工具箱</div>
<div class="hd" style="left:24px">时间</div>
<div class="hd r" style="right:1086.5px">交易品种</div>
<div class="hd r" style="right:1031.5px">订单号</div>
<div class="hd r" style="right:984.5px">类型</div>
<div class="hd r" style="right:905.5px">交易量</div>
<div class="hd r" style="right:826.5px">价位</div>
<div class="hd r" style="right:747.5px">止损</div>
<div class="hd r" style="right:668.5px">止盈</div>
<div class="hd r" style="right:549.5px">时间</div>
<div class="hd r" style="right:470.5px">价位</div>
<div class="hd r" style="right:383.5px">盈利</div>
<div class="hd r" style="right:296.5px">变更</div>
<div class="hd r" style="right:209.5px">幻数</div>
<div class="hd r" style="right:28.5px">注释</div>
<svg class="abs" style="left:65px;top:126px" width="8" height="5" viewBox="0 0 8 5"><path d="M0 4.5 L4 0.5 L8 4.5 Z" fill="#000"/></svg>
<div class="vl" style="left:120px;top:117px;height:24px;background:linear-gradient(#bcbcbc,#9c9c9c)"></div>
<div class="vl" style="left:191px;top:117px;height:24px;background:linear-gradient(#bcbcbc,#9c9c9c)"></div>
<div class="vl" style="left:246px;top:117px;height:24px;background:linear-gradient(#bcbcbc,#9c9c9c)"></div>
<div class="vl" style="left:293px;top:117px;height:24px;background:linear-gradient(#bcbcbc,#9c9c9c)"></div>
<div class="vl" style="left:372px;top:117px;height:24px;background:linear-gradient(#bcbcbc,#9c9c9c)"></div>
<div class="vl" style="left:451px;top:117px;height:24px;background:linear-gradient(#bcbcbc,#9c9c9c)"></div>
<div class="vl" style="left:530px;top:117px;height:24px;background:linear-gradient(#bcbcbc,#9c9c9c)"></div>
<div class="vl" style="left:609px;top:117px;height:24px;background:linear-gradient(#bcbcbc,#9c9c9c)"></div>
<div class="vl" style="left:728px;top:117px;height:24px;background:linear-gradient(#bcbcbc,#9c9c9c)"></div>
<div class="vl" style="left:807px;top:117px;height:24px;background:linear-gradient(#bcbcbc,#9c9c9c)"></div>
<div class="vl" style="left:894px;top:117px;height:24px;background:linear-gradient(#bcbcbc,#9c9c9c)"></div>
<div class="vl" style="left:981px;top:117px;height:24px;background:linear-gradient(#bcbcbc,#9c9c9c)"></div>
<div class="vl" style="left:1068px;top:117px;height:24px;background:linear-gradient(#bcbcbc,#9c9c9c)"></div>
<div class="row" style="top:141px">
<svg class="abs" style="left:5px;top:3px" width="11" height="15" viewBox="0 0 11 15"><rect x="0.6" y="0.6" width="9.8" height="13.8" rx="2.2" fill="#fff" stroke="#d8392f" stroke-width="1.2"/><path d="M3.700 4.500h3.200M3.700 7.500h3.200" stroke="#d8392f" stroke-width="1.200"/></svg>
<div class="c l" style="left:22px;width:81px;letter-spacing:.08px">2026.03.05 ...</div>
<div class="c" style="left:104px;width:70px;letter-spacing:.3px;padding-right:2.5px">xauusd.c</div>
<div class="c l" style="left:182px;width:52px">68651...</div>
<div class="c " style="left:230px;width:46px">sell</div>
<div class="c " style="left:277px;width:78px">0.01</div>
<div class="c " style="left:356px;width:78px">5072.62</div>
<div class="c " style="left:435px;width:78px">5077.62</div>
<div class="c g" style="left:514px;width:78px">5071.23</div>
<div class="c l" style="left:599px;width:112px;letter-spacing:.12px">2026.03.05 17:08:...</div>
<div class="c " style="left:712px;width:78px">5069.79</div>
<div class="c blue" style="left:791px;width:86px">2.83</div>
<div class="c blue" style="left:878px;width:86px">0.06 %</div>
<div class="c " style="left:965px;width:86px">622</div>
<div class="c " style="left:1052px;width:181px">sell</div>
</div>
<div class="hl" style="top:161px"></div>
<div class="row alt" style="top:162px">
<svg class="abs" style="left:5px;top:3px" width="11" height="15" viewBox="0 0 11 15"><rect x="0.6" y="0.6" width="9.8" height="13.8" rx="2.2" fill="#fff" stroke="#d8392f" stroke-width="1.2"/><path d="M3.700 4.500h3.200M3.700 7.500h3.200" stroke="#d8392f" stroke-width="1.200"/></svg>
<div class="c l" style="left:22px;width:81px;letter-spacing:.08px">2026.03.05 ...</div>
<div class="c" style="left:104px;width:70px;letter-spacing:.3px;padding-right:2.5px">xauusd.c</div>
<div class="c l" style="left:182px;width:52px">68651...</div>
<div class="c " style="left:230px;width:46px">sell</div>
<div class="c " style="left:277px;width:78px">0.01</div>
<div class="c " style="left:356px;width:78px">5069.77</div>
<div class="c " style="left:435px;width:78px">5074.77</div>
<div class="c g" style="left:514px;width:78px">5068.11</div>
<div class="c l" style="left:599px;width:112px;letter-spacing:.12px">2026.03.05 17:08:...</div>
<div class="c " style="left:712px;width:78px">5065.51</div>
<div class="c blue" style="left:791px;width:86px">4.26</div>
<div class="c blue" style="left:878px;width:86px">0.08 %</div>
<div class="c " style="left:965px;width:86px">622</div>
<div class="c " style="left:1052px;width:181px">sell</div>
</div>
<div class="hl" style="top:182px"></div>
<div class="row" style="top:183px">
<svg class="abs" style="left:5px;top:3px" width="11" height="15" viewBox="0 0 11 15"><rect x="0.6" y="0.6" width="9.8" height="13.8" rx="2.2" fill="#fff" stroke="#d8392f" stroke-width="1.2"/><path d="M3.700 4.500h3.200M3.700 7.500h3.200" stroke="#d8392f" stroke-width="1.200"/></svg>
<div class="c l" style="left:22px;width:81px;letter-spacing:.08px">2026.03.05 ...</div>
<div class="c" style="left:104px;width:70px;letter-spacing:.3px;padding-right:2.5px">xauusd.c</div>
<div class="c l" style="left:182px;width:52px">68652...</div>
<div class="c " style="left:230px;width:46px">sell</div>
<div class="c " style="left:277px;width:78px">0.01</div>
<div class="c " style="left:356px;width:78px">5069.35</div>
<div class="c " style="left:435px;width:78px">5074.35</div>
<div class="c g" style="left:514px;width:78px">5068.11</div>
<div class="c l" style="left:599px;width:112px;letter-spacing:.12px">2026.03.05 17:08:...</div>
<div class="c " style="left:712px;width:78px">5065.51</div>
<div class="c blue" style="left:791px;width:86px">3.84</div>
<div class="c blue" style="left:878px;width:86px">0.08 %</div>
<div class="c " style="left:965px;width:86px">622</div>
<div class="c " style="left:1052px;width:181px">sell</div>
</div>
<div class="hl" style="top:203px"></div>
<div class="row alt" style="top:204px">
<svg class="abs" style="left:5px;top:3px" width="11" height="15" viewBox="0 0 11 15"><rect x="0.6" y="0.6" width="9.8" height="13.8" rx="2.2" fill="#fff" stroke="#d8392f" stroke-width="1.2"/><path d="M3.700 4.500h3.200M3.700 7.500h3.200" stroke="#d8392f" stroke-width="1.200"/></svg>
<div class="c l" style="left:22px;width:81px;letter-spacing:.08px">2026.03.05 ...</div>
<div class="c" style="left:104px;width:70px;letter-spacing:.3px;padding-right:2.5px">xauusd.c</div>
<div class="c l" style="left:182px;width:52px">68652...</div>
<div class="c " style="left:230px;width:46px">sell</div>
<div class="c " style="left:277px;width:78px">0.01</div>
<div class="c " style="left:356px;width:78px">5069.50</div>
<div class="c rd" style="left:435px;width:78px">5066.57</div>
<div class="c " style="left:514px;width:78px">5064.15</div>
<div class="c l" style="left:599px;width:112px;letter-spacing:.12px">2026.03.05 17:09:...</div>
<div class="c " style="left:712px;width:78px">5066.57</div>
<div class="c blue" style="left:791px;width:86px">2.93</div>
<div class="c blue" style="left:878px;width:86px">0.06 %</div>
<div class="c " style="left:965px;width:86px">622</div>
<div class="c " style="left:1052px;width:181px">sell</div>
</div>
<div class="hl" style="top:224px"></div>
<div class="row" style="top:225px">
<svg class="abs" style="left:5px;top:3px" width="11" height="15" viewBox="0 0 11 15"><rect x="0.6" y="0.6" width="9.8" height="13.8" rx="2.2" fill="#fff" stroke="#d8392f" stroke-width="1.2"/><path d="M3.700 4.500h3.200M3.700 7.500h3.200" stroke="#d8392f" stroke-width="1.200"/></svg>
<div class="c l" style="left:22px;width:81px;letter-spacing:.08px">2026.03.05 ...</div>
<div class="c" style="left:104px;width:70px;letter-spacing:.3px;padding-right:2.5px">xauusd.c</div>
<div class="c l" style="left:182px;width:52px">68652...</div>
<div class="c " style="left:230px;width:46px">sell</div>
<div class="c " style="left:277px;width:78px">0.01</div>
<div class="c " style="left:356px;width:78px">5065.85</div>
<div class="c " style="left:435px;width:78px">5070.85</div>
<div class="c g" style="left:514px;width:78px">5064.40</div>
<div class="c l" style="left:599px;width:112px;letter-spacing:.12px">2026.03.05 17:09:...</div>
<div class="c " style="left:712px;width:78px">5062.49</div>
<div class="c blue" style="left:791px;width:86px">3.36</div>
<div class="c blue" style="left:878px;width:86px">0.07 %</div>
<div class="c " style="left:965px;width:86px">622</div>
<div class="c " style="left:1052px;width:181px">sell</div>
</div>
<div class="hl" style="top:245px"></div>
<div class="row alt" style="top:246px">
<svg class="abs" style="left:5px;top:3px" width="11" height="15" viewBox="0 0 11 15"><rect x="0.6" y="0.6" width="9.8" height="13.8" rx="2.2" fill="#fff" stroke="#0a5aa0" stroke-width="1.2"/><path d="M3.700 4.500h3.200M3.700 7.500h3.200" stroke="#0a5aa0" stroke-width="1.200"/></svg>
<div class="c l" style="left:22px;width:81px;letter-spacing:.08px">2026.03.05 ...</div>
<div class="c" style="left:104px;width:70px;letter-spacing:.3px;padding-right:2.5px">xauusd.c</div>
<div class="c l" style="left:182px;width:52px">68652...</div>
<div class="c " style="left:230px;width:46px">buy</div>
<div class="c " style="left:277px;width:78px">0.01</div>
<div class="c " style="left:356px;width:78px">5066.70</div>
<div class="c rd" style="left:435px;width:78px">5068.13</div>
<div class="c " style="left:514px;width:78px">5070.30</div>
<div class="c l" style="left:599px;width:112px;letter-spacing:.12px">2026.03.05 17:09:...</div>
<div class="c " style="left:712px;width:78px">5068.13</div>
<div class="c blue" style="left:791px;width:86px">1.43</div>
<div class="c blue" style="left:878px;width:86px">0.03 %</div>
<div class="c " style="left:965px;width:86px">622</div>
<div class="c " style="left:1052px;width:181px">buy</div>
</div>
<div class="hl" style="top:266px"></div>
<div class="row" style="top:267px">
<svg class="abs" style="left:5px;top:3px" width="11" height="15" viewBox="0 0 11 15"><rect x="0.6" y="0.6" width="9.8" height="13.8" rx="2.2" fill="#fff" stroke="#0a5aa0" stroke-width="1.2"/><path d="M3.700 4.500h3.200M3.700 7.500h3.200" stroke="#0a5aa0" stroke-width="1.200"/></svg>
<div class="c l" style="left:22px;width:81px;letter-spacing:.08px">2026.03.05 ...</div>
<div class="c" style="left:104px;width:70px;letter-spacing:.3px;padding-right:2.5px">xauusd.c</div>
<div class="c l" style="left:182px;width:52px">68652...</div>
<div class="c " style="left:230px;width:46px">buy</div>
<div class="c " style="left:277px;width:78px">0.01</div>
<div class="c " style="left:356px;width:78px">5066.70</div>
<div class="c rd" style="left:435px;width:78px">5068.13</div>
<div class="c " style="left:514px;width:78px">5070.30</div>
<div class="c l" style="left:599px;width:112px;letter-spacing:.12px">2026.03.05 17:09:...</div>
<div class="c " style="left:712px;width:78px">5068.13</div>
<div class="c blue" style="left:791px;width:86px">1.43</div>
<div class="c blue" style="left:878px;width:86px">0.03 %</div>
<div class="c " style="left:965px;width:86px">622</div>
<div class="c " style="left:1052px;width:181px">buy</div>
</div>
<div class="hl" style="top:287px"></div>
<div class="row alt" style="top:288px">
<svg class="abs" style="left:5px;top:3px" width="11" height="15" viewBox="0 0 11 15"><rect x="0.6" y="0.6" width="9.8" height="13.8" rx="2.2" fill="#fff" stroke="#0a5aa0" stroke-width="1.2"/><path d="M3.700 4.500h3.200M3.700 7.500h3.200" stroke="#0a5aa0" stroke-width="1.200"/></svg>
<div class="c l" style="left:22px;width:81px;letter-spacing:.08px">2026.03.05 ...</div>
<div class="c" style="left:104px;width:70px;letter-spacing:.3px;padding-right:2.5px">xauusd.c</div>
<div class="c l" style="left:182px;width:52px">68652...</div>
<div class="c " style="left:230px;width:46px">buy</div>
<div class="c " style="left:277px;width:78px">0.01</div>
<div class="c " style="left:356px;width:78px">5066.70</div>
<div class="c rd" style="left:435px;width:78px">5068.13</div>
<div class="c " style="left:514px;width:78px">5070.30</div>
<div class="c l" style="left:599px;width:112px;letter-spacing:.12px">2026.03.05 17:09:...</div>
<div class="c " style="left:712px;width:78px">5068.13</div>
<div class="c blue" style="left:791px;width:86px">1.43</div>
<div class="c blue" style="left:878px;width:86px">0.03 %</div>
<div class="c " style="left:965px;width:86px">622</div>
<div class="c " style="left:1052px;width:181px">buy</div>
</div>
<div class="hl" style="top:308px"></div>
<div class="row" style="top:309px">
<svg class="abs" style="left:5px;top:3px" width="11" height="15" viewBox="0 0 11 15"><rect x="0.6" y="0.6" width="9.8" height="13.8" rx="2.2" fill="#fff" stroke="#d8392f" stroke-width="1.2"/><path d="M3.700 4.500h3.200M3.700 7.500h3.200" stroke="#d8392f" stroke-width="1.200"/></svg>
<div class="c l" style="left:22px;width:81px;letter-spacing:.08px">2026.03.05 ...</div>
<div class="c" style="left:104px;width:70px;letter-spacing:.3px;padding-right:2.5px">xauusd.c</div>
<div class="c l" style="left:182px;width:52px">68652...</div>
<div class="c " style="left:230px;width:46px">sell</div>
<div class="c " style="left:277px;width:78px">0.01</div>
<div class="c " style="left:356px;width:78px">5066.53</div>
<div class="c " style="left:435px;width:78px">5071.34</div>
<div class="c g" style="left:514px;width:78px">5066.10</div>
<div class="c l" style="left:599px;width:112px;letter-spacing:.12px">2026.03.05 17:09:...</div>
<div class="c " style="left:712px;width:78px">5062.49</div>
<div class="c blue" style="left:791px;width:86px">4.04</div>
<div class="c blue" style="left:878px;width:86px">0.08 %</div>
<div class="c " style="left:965px;width:86px">622</div>
<div class="c " style="left:1052px;width:181px">sell</div>
</div>
<div class="hl" style="top:329px"></div>
<div class="row alt" style="top:330px">
<svg class="abs" style="left:5px;top:3px" width="11" height="15" viewBox="0 0 11 15"><rect x="0.6" y="0.6" width="9.8" height="13.8" rx="2.2" fill="#fff" stroke="#0a5aa0" stroke-width="1.2"/><path d="M3.700 4.500h3.200M3.700 7.500h3.200" stroke="#0a5aa0" stroke-width="1.200"/></svg>
<div class="c l" style="left:22px;width:81px;letter-spacing:.08px">2026.03.05 ...</div>
<div class="c" style="left:104px;width:70px;letter-spacing:.3px;padding-right:2.5px">xauusd.c</div>
<div class="c l" style="left:182px;width:52px">68652...</div>
<div class="c " style="left:230px;width:46px">buy</div>
<div class="c " style="left:277px;width:78px">0.01</div>
<div class="c " style="left:356px;width:78px">5066.70</div>
<div class="c rd" style="left:435px;width:78px">5068.13</div>
<div class="c " style="left:514px;width:78px">5070.30</div>
<div class="c l" style="left:599px;width:112px;letter-spacing:.12px">2026.03.05 17:09:...</div>
<div class="c " style="left:712px;width:78px">5068.13</div>
<div class="c blue" style="left:791px;width:86px">1.43</div>
<div class="c blue" style="left:878px;width:86px">0.03 %</div>
<div class="c " style="left:965px;width:86px">622</div>
<div class="c " style="left:1052px;width:181px">buy</div>
</div>
<div class="hl" style="top:350px"></div>
<div class="row" style="top:351px">
<svg class="abs" style="left:5px;top:3px" width="11" height="15" viewBox="0 0 11 15"><rect x="0.6" y="0.6" width="9.8" height="13.8" rx="2.2" fill="#fff" stroke="#d8392f" stroke-width="1.2"/><path d="M3.700 4.500h3.200M3.700 7.500h3.200" stroke="#d8392f" stroke-width="1.200"/></svg>
<div class="c l" style="left:22px;width:81px;letter-spacing:.08px">2026.03.05 ...</div>
<div class="c" style="left:104px;width:70px;letter-spacing:.3px;padding-right:2.5px">xauusd.c</div>
<div class="c l" style="left:182px;width:52px">68652...</div>
<div class="c " style="left:230px;width:46px">sell</div>
<div class="c " style="left:277px;width:78px">0.01</div>
<div class="c " style="left:356px;width:78px">5067.32</div>
<div class="c " style="left:435px;width:78px">5072.32</div>
<div class="c g" style="left:514px;width:78px">5066.10</div>
<div class="c l" style="left:599px;width:112px;letter-spacing:.12px">2026.03.05 17:09:...</div>
<div class="c " style="left:712px;width:78px">5062.49</div>
<div class="c blue" style="left:791px;width:86px">4.83</div>
<div class="c blue" style="left:878px;width:86px">0.10 %</div>
<div class="c " style="left:965px;width:86px">622</div>
<div class="c " style="left:1052px;width:181px">sell</div>
</div>
<div class="hl" style="top:371px"></div>
<div class="row alt" style="top:372px">
<svg class="abs" style="left:5px;top:3px" width="11" height="15" viewBox="0 0 11 15"><rect x="0.6" y="0.6" width="9.8" height="13.8" rx="2.2" fill="#fff" stroke="#d8392f" stroke-width="1.2"/><path d="M3.700 4.500h3.200M3.700 7.500h3.200" stroke="#d8392f" stroke-width="1.200"/></svg>
<div class="c l" style="left:22px;width:81px;letter-spacing:.08px">2026.03.05 ...</div>
<div class="c" style="left:104px;width:70px;letter-spacing:.3px;padding-right:2.5px">xauusd.c</div>
<div class="c l" style="left:182px;width:52px">68653...</div>
<div class="c " style="left:230px;width:46px">sell</div>
<div class="c " style="left:277px;width:78px">0.01</div>
<div class="c " style="left:356px;width:78px">5061.74</div>
<div class="c rd" style="left:435px;width:78px">5066.74</div>
<div class="c " style="left:514px;width:78px">5061.23</div>
<div class="c l" style="left:599px;width:112px;letter-spacing:.12px">2026.03.05 17:09:...</div>
<div class="c " style="left:712px;width:78px">5066.74</div>
<div class="c red" style="left:791px;width:86px">-5.00</div>
<div class="c red" style="left:878px;width:86px">-0.10 %</div>
<div class="c " style="left:965px;width:86px">622</div>
<div class="c " style="left:1052px;width:181px">sell</div>
</div>
<div class="hl" style="top:392px"></div>
<div class="row" style="top:393px">
<svg class="abs" style="left:5px;top:3px" width="11" height="15" viewBox="0 0 11 15"><rect x="0.6" y="0.6" width="9.8" height="13.8" rx="2.2" fill="#fff" stroke="#0a5aa0" stroke-width="1.2"/><path d="M3.700 4.500h3.200M3.700 7.500h3.200" stroke="#0a5aa0" stroke-width="1.200"/></svg>
<div class="c l" style="left:22px;width:81px;letter-spacing:.08px">2026.03.05 ...</div>
<div class="c" style="left:104px;width:70px;letter-spacing:.3px;padding-right:2.5px">xauusd.c</div>
<div class="c l" style="left:182px;width:52px">68653...</div>
<div class="c " style="left:230px;width:46px">buy</div>
<div class="c " style="left:277px;width:78px">0.01</div>
<div class="c " style="left:356px;width:78px">5064.32</div>
<div class="c rd" style="left:435px;width:78px">5064.88</div>
<div class="c " style="left:514px;width:78px">5067.26</div>
<div class="c l" style="left:599px;width:112px;letter-spacing:.12px">2026.03.05 17:09:...</div>
<div class="c " style="left:712px;width:78px">5064.88</div>
<div class="c blue" style="left:791px;width:86px">0.56</div>
<div class="c blue" style="left:878px;width:86px">0.01 %</div>
<div class="c " style="left:965px;width:86px">622</div>
<div class="c " style="left:1052px;width:181px">buy</div>
</div>
<div class="hl" style="top:413px"></div>
<div class="row alt" style="top:414px">
<svg class="abs" style="left:5px;top:3px" width="11" height="15" viewBox="0 0 11 15"><rect x="0.6" y="0.6" width="9.8" height="13.8" rx="2.2" fill="#fff" stroke="#d8392f" stroke-width="1.2"/><path d="M3.700 4.500h3.200M3.700 7.500h3.200" stroke="#d8392f" stroke-width="1.200"/></svg>
<div class="c l" style="left:22px;width:81px;letter-spacing:.08px">2026.03.05 ...</div>
<div class="c" style="left:104px;width:70px;letter-spacing:.3px;padding-right:2.5px">xauusd.c</div>
<div class="c l" style="left:182px;width:52px">68653...</div>
<div class="c " style="left:230px;width:46px">sell</div>
<div class="c " style="left:277px;width:78px">0.01</div>
<div class="c " style="left:356px;width:78px">5064.23</div>
<div class="c rd" style="left:435px;width:78px">5068.45</div>
<div class="c " style="left:514px;width:78px">5062.90</div>
<div class="c l" style="left:599px;width:112px;letter-spacing:.12px">2026.03.05 17:09:...</div>
<div class="c " style="left:712px;width:78px">5068.45</div>
<div class="c red" style="left:791px;width:86px">-4.22</div>
<div class="c red" style="left:878px;width:86px">-0.08 %</div>
<div class="c " style="left:965px;width:86px">622</div>
<div class="c " style="left:1052px;width:181px">sell</div>
</div>
<div class="hl" style="top:434px"></div>
<div class="row" style="top:435px">
<svg class="abs" style="left:5px;top:3px" width="11" height="15" viewBox="0 0 11 15"><rect x="0.6" y="0.6" width="9.8" height="13.8" rx="2.2" fill="#fff" stroke="#0a5aa0" stroke-width="1.2"/><path d="M3.700 4.500h3.200M3.700 7.500h3.200" stroke="#0a5aa0" stroke-width="1.200"/></svg>
<div class="c l" style="left:22px;width:81px;letter-spacing:.08px">2026.03.05 ...</div>
<div class="c" style="left:104px;width:70px;letter-spacing:.3px;padding-right:2.5px">xauusd.c</div>
<div class="c l" style="left:182px;width:52px">68653...</div>
<div class="c " style="left:230px;width:46px">buy</div>
<div class="c " style="left:277px;width:78px">0.01</div>
<div class="c " style="left:356px;width:78px">5067.54</div>
<div class="c " style="left:435px;width:78px">5062.54</div>
<div class="c g" style="left:514px;width:78px">5070.92</div>
<div class="c l" style="left:599px;width:112px;letter-spacing:.12px">2026.03.05 17:09:...</div>
<div class="c " style="left:712px;width:78px">5072.01</div>
<div class="c blue" style="left:791px;width:86px">4.47</div>
<div class="c blue" style="left:878px;width:86px">0.09 %</div>
<div class="c " style="left:965px;width:86px">622</div>
<div class="c " style="left:1052px;width:181px">buy</div>
</div>
<div class="hl" style="top:455px"></div>
<div class="row alt" style="top:456px">
<svg class="abs" style="left:5px;top:3px" width="11" height="15" viewBox="0 0 11 15"><rect x="0.6" y="0.6" width="9.8" height="13.8" rx="2.2" fill="#fff" stroke="#d8392f" stroke-width="1.2"/><path d="M3.700 4.500h3.200M3.700 7.500h3.200" stroke="#d8392f" stroke-width="1.200"/></svg>
<div class="c l" style="left:22px;width:81px;letter-spacing:.08px">2026.03.05 ...</div>
<div class="c" style="left:104px;width:70px;letter-spacing:.3px;padding-right:2.5px">xauusd.c</div>
<div class="c l" style="left:182px;width:52px">68653...</div>
<div class="c " style="left:230px;width:46px">sell</div>
<div class="c " style="left:277px;width:78px">0.01</div>
<div class="c " style="left:356px;width:78px">5065.58</div>
<div class="c rd" style="left:435px;width:78px">5070.58</div>
<div class="c " style="left:514px;width:78px">5063.61</div>
<div class="c l" style="left:599px;width:112px;letter-spacing:.12px">2026.03.05 17:09:...</div>
<div class="c " style="left:712px;width:78px">5070.58</div>
<div class="c red" style="left:791px;width:86px">-5.00</div>
<div class="c red" style="left:878px;width:86px">-0.10 %</div>
<div class="c " style="left:965px;width:86px">622</div>
<div class="c " style="left:1052px;width:181px">sell</div>
</div>
<div class="hl" style="top:476px"></div>
<div class="row sel" style="top:477px">
<svg class="abs" style="left:5px;top:3px" width="11" height="15" viewBox="0 0 11 15"><rect x="0.6" y="0.6" width="9.8" height="13.8" rx="2.2" fill="#fff" stroke="#d8392f" stroke-width="1.2"/><path d="M3.700 4.500h3.200M3.700 7.500h3.200" stroke="#d8392f" stroke-width="1.200"/></svg>
<div class="c l" style="left:22px;width:81px;letter-spacing:.08px">2026.03.05 ...</div>
<div class="c" style="left:104px;width:70px;letter-spacing:.3px;padding-right:2.5px">xauusd.c</div>
<div class="c l" style="left:182px;width:52px">68653...</div>
<div class="c " style="left:230px;width:46px">sell</div>
<div class="c " style="left:277px;width:78px">0.01</div>
<div class="c " style="left:356px;width:78px">5064.56</div>
<div class="c " style="left:435px;width:78px">5069.56</div>
<div class="c " style="left:514px;width:78px">5063.61</div>
<div class="c l" style="left:599px;width:112px;letter-spacing:.12px">2026.03.05 17:09:...</div>
<div class="c " style="left:712px;width:78px">5069.56</div>
<div class="c red" style="left:791px;width:86px">-5.00</div>
<div class="c red" style="left:878px;width:86px">-0.10 %</div>
<div class="c " style="left:965px;width:86px">622</div>
<div class="c " style="left:1052px;width:181px">sell</div>
</div>
<div class="hl" style="top:497px"></div>
<div class="row alt" style="top:498px">
<svg class="abs" style="left:5px;top:3px" width="11" height="15" viewBox="0 0 11 15"><rect x="0.6" y="0.6" width="9.8" height="13.8" rx="2.2" fill="#fff" stroke="#0a5aa0" stroke-width="1.2"/><path d="M3.700 4.500h3.200M3.700 7.500h3.200" stroke="#0a5aa0" stroke-width="1.200"/></svg>
<div class="c l" style="left:22px;width:81px;letter-spacing:.08px">2026.03.05 ...</div>
<div class="c" style="left:104px;width:70px;letter-spacing:.3px;padding-right:2.5px">xauusd.c</div>
<div class="c l" style="left:182px;width:52px">68653...</div>
<div class="c " style="left:230px;width:46px">buy</div>
<div class="c " style="left:277px;width:78px">0.01</div>
<div class="c " style="left:356px;width:78px">5066.11</div>
<div class="c " style="left:435px;width:78px">5066.72</div>
<div class="c g" style="left:514px;width:78px">5070.92</div>
<div class="c l" style="left:599px;width:112px;letter-spacing:.12px">2026.03.05 17:09:...</div>
<div class="c " style="left:712px;width:78px">5072.17</div>
<div class="c blue" style="left:791px;width:86px">6.06</div>
<div class="c blue" style="left:878px;width:86px">0.12 %</div>
<div class="c " style="left:965px;width:86px">622</div>
<div class="c " style="left:1052px;width:181px">buy</div>
</div>
<div class="hl" style="top:518px"></div>
<div class="row" style="top:519px">
<svg class="abs" style="left:5px;top:3px" width="11" height="15" viewBox="0 0 11 15"><rect x="0.6" y="0.6" width="9.8" height="13.8" rx="2.2" fill="#fff" stroke="#0a5aa0" stroke-width="1.2"/><path d="M3.700 4.500h3.200M3.700 7.500h3.200" stroke="#0a5aa0" stroke-width="1.200"/></svg>
<div class="c l" style="left:22px;width:81px;letter-spacing:.08px">2026.03.05 ...</div>
<div class="c" style="left:104px;width:70px;letter-spacing:.3px;padding-right:2.5px">xauusd.c</div>
<div class="c l" style="left:182px;width:52px">68653...</div>
<div class="c " style="left:230px;width:46px">buy</div>
<div class="c " style="left:277px;width:78px">0.01</div>
<div class="c " style="left:356px;width:78px">5067.82</div>
<div class="c " style="left:435px;width:78px">5062.82</div>
<div class="c g" style="left:514px;width:78px">5070.92</div>
<div class="c l" style="left:599px;width:112px;letter-spacing:.12px">2026.03.05 17:09:...</div>
<div class="c " style="left:712px;width:78px">5072.17</div>
<div class="c blue" style="left:791px;width:86px">4.35</div>
<div class="c blue" style="left:878px;width:86px">0.09 %</div>
<div class="c " style="left:965px;width:86px">622</div>
<div class="c " style="left:1052px;width:181px">buy</div>
</div>
<div class="hl" style="top:539px"></div>
<div class="row alt" style="top:540px">
<svg class="abs" style="left:5px;top:3px" width="11" height="15" viewBox="0 0 11 15"><rect x="0.6" y="0.6" width="9.8" height="13.8" rx="2.2" fill="#fff" stroke="#0a5aa0" stroke-width="1.2"/><path d="M3.700 4.500h3.200M3.700 7.500h3.200" stroke="#0a5aa0" stroke-width="1.200"/></svg>
<div class="c l" style="left:22px;width:81px;letter-spacing:.08px">2026.03.05 ...</div>
<div class="c" style="left:104px;width:70px;letter-spacing:.3px;padding-right:2.5px">xauusd.c</div>
<div class="c l" style="left:182px;width:52px">68653...</div>
<div class="c " style="left:230px;width:46px">buy</div>
<div class="c " style="left:277px;width:78px">0.01</div>
<div class="c " style="left:356px;width:78px">5072.29</div>
<div class="c rd" style="left:435px;width:78px">5072.51</div>
<div class="c " style="left:514px;width:78px">5074.77</div>
<div class="c l" style="left:599px;width:112px;letter-spacing:.12px">2026.03.05 17:09:...</div>
<div class="c " style="left:712px;width:78px">5072.51</div>
<div class="c blue" style="left:791px;width:86px">0.22</div>
<div class="c blue" style="left:878px;width:86px">0.00 %</div>
<div class="c " style="left:965px;width:86px">622</div>
<div class="c " style="left:1052px;width:181px">buy</div>
</div>
<div class="hl" style="top:560px"></div>
<div class="row" style="top:561px">
<svg class="abs" style="left:5px;top:3px" width="11" height="15" viewBox="0 0 11 15"><rect x="0.6" y="0.6" width="9.8" height="13.8" rx="2.2" fill="#fff" stroke="#0a5aa0" stroke-width="1.2"/><path d="M3.700 4.500h3.200M3.700 7.500h3.200" stroke="#0a5aa0" stroke-width="1.200"/></svg>
<div class="c l" style="left:22px;width:81px;letter-spacing:.08px">2026.03.05 ...</div>
<div class="c" style="left:104px;width:70px;letter-spacing:.3px;padding-right:2.5px">xauusd.c</div>
<div class="c l" style="left:182px;width:52px">68653...</div>
<div class="c " style="left:230px;width:46px">buy</div>
<div class="c " style="left:277px;width:78px">0.01</div>
<div class="c " style="left:356px;width:78px">5072.82</div>
<div class="c " style="left:435px;width:78px">5068.54</div>
<div class="c g" style="left:514px;width:78px">5074.77</div>
<div class="c l" style="left:599px;width:112px;letter-spacing:.12px">2026.03.05 17:09:...</div>
<div class="c " style="left:712px;width:78px">5075.54</div>
<div class="c blue" style="left:791px;width:86px">2.72</div>
<div class="c blue" style="left:878px;width:86px">0.05 %</div>
<div class="c " style="left:965px;width:86px">622</div>
<div class="c " style="left:1052px;width:181px">buy</div>
</div>
<div class="hl" style="top:581px"></div>
<div class="row alt" style="top:582px">
<svg class="abs" style="left:5px;top:3px" width="11" height="15" viewBox="0 0 11 15"><rect x="0.6" y="0.6" width="9.8" height="13.8" rx="2.2" fill="#fff" stroke="#d8392f" stroke-width="1.2"/><path d="M3.700 4.500h3.200M3.700 7.500h3.200" stroke="#d8392f" stroke-width="1.200"/></svg>
<div class="c l" style="left:22px;width:81px;letter-spacing:.08px">2026.03.05 ...</div>
<div class="c" style="left:104px;width:70px;letter-spacing:.3px;padding-right:2.5px">xauusd.c</div>
<div class="c l" style="left:182px;width:52px">68653...</div>
<div class="c " style="left:230px;width:46px">sell</div>
<div class="c " style="left:277px;width:78px">0.01</div>
<div class="c " style="left:356px;width:78px">5071.10</div>
<div class="c rd" style="left:435px;width:78px">5076.10</div>
<div class="c " style="left:514px;width:78px">5070.08</div>
<div class="c l" style="left:599px;width:112px;letter-spacing:.12px">2026.03.05 17:09:...</div>
<div class="c " style="left:712px;width:78px">5076.10</div>
<div class="c red" style="left:791px;width:86px">-5.00</div>
<div class="c red" style="left:878px;width:86px">-0.10 %</div>
<div class="c " style="left:965px;width:86px">622</div>
<div class="c " style="left:1052px;width:181px">sell</div>
</div>
<div class="hl" style="top:602px"></div>
<div class="row" style="top:603px">
<svg class="abs" style="left:5px;top:3px" width="11" height="15" viewBox="0 0 11 15"><rect x="0.6" y="0.6" width="9.8" height="13.8" rx="2.2" fill="#fff" stroke="#0a5aa0" stroke-width="1.2"/><path d="M3.700 4.500h3.200M3.700 7.500h3.200" stroke="#0a5aa0" stroke-width="1.200"/></svg>
<div class="c l" style="left:22px;width:81px;letter-spacing:.08px">2026.03.05 ...</div>
<div class="c" style="left:104px;width:70px;letter-spacing:.3px;padding-right:2.5px">xauusd.c</div>
<div class="c l" style="left:182px;width:52px">68654...</div>
<div class="c " style="left:230px;width:46px">buy</div>
<div class="c " style="left:277px;width:78px">0.01</div>
<div class="c " style="left:356px;width:78px">5073.77</div>
<div class="c " style="left:435px;width:78px">5068.77</div>
<div class="c g" style="left:514px;width:78px">5074.47</div>
<div class="c l" style="left:599px;width:112px;letter-spacing:.12px">2026.03.05 17:09:...</div>
<div class="c " style="left:712px;width:78px">5075.54</div>
<div class="c blue" style="left:791px;width:86px">1.77</div>
<div class="c blue" style="left:878px;width:86px">0.03 %</div>
<div class="c " style="left:965px;width:86px">622</div>
<div class="c " style="left:1052px;width:181px">buy</div>
</div>
<div class="hl" style="top:623px"></div>
<div class="row alt" style="top:624px">
<svg class="abs" style="left:5px;top:3px" width="11" height="15" viewBox="0 0 11 15"><rect x="0.6" y="0.6" width="9.8" height="13.8" rx="2.2" fill="#fff" stroke="#0a5aa0" stroke-width="1.2"/><path d="M3.700 4.500h3.200M3.700 7.500h3.200" stroke="#0a5aa0" stroke-width="1.200"/></svg>
<div class="c l" style="left:22px;width:81px;letter-spacing:.08px">2026.03.05 ...</div>
<div class="c" style="left:104px;width:70px;letter-spacing:.3px;padding-right:2.5px">xauusd.c</div>
<div class="c l" style="left:182px;width:52px">68654...</div>
<div class="c " style="left:230px;width:46px">buy</div>
<div class="c " style="left:277px;width:78px">0.01</div>
<div class="c " style="left:356px;width:78px">5076.05</div>
<div class="c rd" style="left:435px;width:78px">5076.07</div>
<div class="c " style="left:514px;width:78px">5078.35</div>
<div class="c l" style="left:599px;width:112px;letter-spacing:.12px">2026.03.05 17:09:...</div>
<div class="c " style="left:712px;width:78px">5076.07</div>
<div class="c blue" style="left:791px;width:86px">0.02</div>
<div class="c blue" style="left:878px;width:86px">0.00 %</div>
<div class="c " style="left:965px;width:86px">622</div>
<div class="c " style="left:1052px;width:181px">buy</div>
</div>
<div class="hl" style="top:644px"></div>
<div class="row" style="top:645px">
<svg class="abs" style="left:5px;top:3px" width="11" height="15" viewBox="0 0 11 15"><rect x="0.6" y="0.6" width="9.8" height="13.8" rx="2.2" fill="#fff" stroke="#0a5aa0" stroke-width="1.2"/><path d="M3.700 4.500h3.200M3.700 7.500h3.200" stroke="#0a5aa0" stroke-width="1.200"/></svg>
<div class="c l" style="left:22px;width:81px;letter-spacing:.08px">2026.03.05 ...</div>
<div class="c" style="left:104px;width:70px;letter-spacing:.3px;padding-right:2.5px">xauusd.c</div>
<div class="c l" style="left:182px;width:52px">68654...</div>
<div class="c " style="left:230px;width:46px">buy</div>
<div class="c " style="left:277px;width:78px">0.01</div>
<div class="c " style="left:356px;width:78px">5077.35</div>
<div class="c rd" style="left:435px;width:78px">5072.35</div>
<div class="c " style="left:514px;width:78px">5078.01</div>
<div class="c l" style="left:599px;width:112px;letter-spacing:.12px">2026.03.05 17:09:...</div>
<div class="c " style="left:712px;width:78px">5072.35</div>
<div class="c red" style="left:791px;width:86px">-5.00</div>
<div class="c red" style="left:878px;width:86px">-0.10 %</div>
<div class="c " style="left:965px;width:86px">622</div>
<div class="c " style="left:1052px;width:181px">buy</div>
</div>
<div class="hl" style="top:665px"></div>
<div class="row alt" style="top:666px">
<svg class="abs" style="left:5px;top:3px" width="11" height="15" viewBox="0 0 11 15"><rect x="0.6" y="0.6" width="9.8" height="13.8" rx="2.2" fill="#fff" stroke="#d8392f" stroke-width="1.2"/><path d="M3.700 4.500h3.200M3.700 7.500h3.200" stroke="#d8392f" stroke-width="1.200"/></svg>
<div class="c l" style="left:22px;width:81px;letter-spacing:.08px">2026.03.05 ...</div>
<div class="c" style="left:104px;width:70px;letter-spacing:.3px;padding-right:2.5px">xauusd.c</div>
<div class="c l" style="left:182px;width:52px">68654...</div>
<div class="c " style="left:230px;width:46px">sell</div>
<div class="c " style="left:277px;width:78px">0.01</div>
<div class="c " style="left:356px;width:78px">5074.24</div>
<div class="c rd" style="left:435px;width:78px">5074.15</div>
<div class="c " style="left:514px;width:78px">5071.66</div>
<div class="c l" style="left:599px;width:112px;letter-spacing:.12px">2026.03.05 17:09:...</div>
<div class="c " style="left:712px;width:78px">5074.15</div>
<div class="c blue" style="left:791px;width:86px">0.09</div>
<div class="c blue" style="left:878px;width:86px">0.00 %</div>
<div class="c " style="left:965px;width:86px">622</div>
<div class="c " style="left:1052px;width:181px">sell</div>
</div>
<div class="hl" style="top:686px"></div>
<div class="row" style="top:687px">
<svg class="abs" style="left:5px;top:3px" width="11" height="15" viewBox="0 0 11 15"><rect x="0.6" y="0.6" width="9.8" height="13.8" rx="2.2" fill="#fff" stroke="#0a5aa0" stroke-width="1.2"/><path d="M3.700 4.500h3.200M3.700 7.500h3.200" stroke="#0a5aa0" stroke-width="1.200"/></svg>
<div class="c l" style="left:22px;width:81px;letter-spacing:.08px">2026.03.05 ...</div>
<div class="c" style="left:104px;width:70px;letter-spacing:.3px;padding-right:2.5px">xauusd.c</div>
<div class="c l" style="left:182px;width:52px">68654...</div>
<div class="c " style="left:230px;width:46px">buy</div>
<div class="c " style="left:277px;width:78px">0.01</div>
<div class="c " style="left:356px;width:78px">5070.24</div>
<div class="c rd" style="left:435px;width:78px">5070.72</div>
<div class="c " style="left:514px;width:78px">5072.93</div>
<div class="c l" style="left:599px;width:112px;letter-spacing:.12px">2026.03.05 17:10:...</div>
<div class="c " style="left:712px;width:78px">5070.72</div>
<div class="c blue" style="left:791px;width:86px">0.48</div>
<div class="c blue" style="left:878px;width:86px">0.01 %</div>
<div class="c " style="left:965px;width:86px">622</div>
<div class="c " style="left:1052px;width:181px">buy</div>
</div>
<div class="hl" style="top:707px"></div>
<div class="abs" style="left:16px;top:117px;width:2px;height:590px;background:#f0f0f0"></div>
<div class="vl" style="left:120px;top:141px;height:567px"></div>
<div class="vl" style="left:191px;top:141px;height:567px"></div>
<div class="vl" style="left:246px;top:141px;height:567px"></div>
<div class="vl" style="left:293px;top:141px;height:567px"></div>
<div class="vl" style="left:372px;top:141px;height:567px"></div>
<div class="vl" style="left:451px;top:141px;height:567px"></div>
<div class="vl" style="left:530px;top:141px;height:567px"></div>
<div class="vl" style="left:609px;top:141px;height:567px"></div>
<div class="vl" style="left:728px;top:141px;height:567px"></div>
<div class="vl" style="left:807px;top:141px;height:567px"></div>
<div class="vl" style="left:894px;top:141px;height:567px"></div>
<div class="vl" style="left:981px;top:141px;height:567px"></div>
<div class="vl" style="left:1068px;top:141px;height:567px"></div>
<div class="abs" style="left:16px;top:707px;width:1234px;height:24px;background:#f0f0f0"></div><div class="abs" style="left:18px;top:707px;width:1232px;height:22px;background:#c8c8c8"></div>
<svg class="abs" style="left:21px;top:712px" width="13" height="13" viewBox="0 0 13 13"><circle cx="6.5" cy="6.5" r="5.3" fill="none" stroke="#000" stroke-width="1"/><path d="M6.5 3.5v6M3.5 6.5h6" stroke="#000" stroke-width="1"/></svg>
<div class="t" style="left:39px;top:708px;font-weight:bold;font-size:12px;line-height:22px">盈利: 151.83</div>
<div class="t" style="left:115.5px;top:708px;font-weight:bold;font-size:12px;line-height:22px">信用: 0.00</div>
<div class="t" style="left:179.5px;top:708px;font-weight:bold;font-size:12px;line-height:22px">入金: 0.00</div>
<div class="t" style="left:242.3px;top:708px;font-weight:bold;font-size:12px;line-height:22px">提款: 0.00</div>
<div class="t" style="left:305.2px;top:708px;font-weight:bold;font-size:12px;line-height:22px">结余: 151.83</div>
<div class="t r" style="right:383px;top:708px;font-weight:bold;font-size:12px;line-height:22px">151.83</div>
<div class="abs" style="left:1250px;top:117px;width:17px;height:613px;background:#f0f0f0"></div>
<div class="abs" style="left:1251px;top:680px;width:15px;height:34px;background:#cdcdcd"></div>
<svg class="abs" style="left:1254px;top:122px" width="10" height="8" viewBox="0 0 10 8"><path d="M1.3 6.5 L5 2.5 L8.7 6.5" stroke="#5a5a5a" stroke-width="1.9" fill="none"/></svg>
<svg class="abs" style="left:1254px;top:719px" width="10" height="8" viewBox="0 0 10 8"><path d="M1.3 1.5 L5 5.5 L8.7 1.5" stroke="#5a5a5a" stroke-width="1.9" fill="none"/></svg>
<div class="abs" style="left:18px;top:730px;width:1249px;height:1px;background:#000;opacity:.12"></div><div class="abs" style="left:18px;top:731px;width:1249px;height:1px;background:#000"></div>
<div class="abs" style="left:16px;top:732px;width:1251px;height:26px;background:#f0f0f0"></div>
<div class="atab" style="left:111px;top:730px;width:44px;height:23px;line-height:24px;font-size:12px">历史</div>
<div class="tab" style="left:32px;top:735px">交易</div>
<div class="tab" style="left:76px;top:735px">敞口</div>
<div class="tab" style="left:165px;top:735px">新闻</div>
<div class="tab" style="left:227px;top:735px">邮箱</div>
<div class="tab" style="left:289px;top:735px">经济日历</div>
<div class="tab" style="left:357px;top:735px">公司</div>
<div class="tab" style="left:401px;top:735px">预警</div>
<div class="tab" style="left:445px;top:735px">文章</div>
<div class="tab" style="left:489px;top:735px">代码库</div>
<div class="tab" style="left:545px;top:735px">专家</div>
<div class="tab" style="left:589px;top:735px">日志</div>
<div class="sep" style="left:67px;top:735px;height:17px"></div>
<div class="sep" style="left:217px;top:735px;height:17px"></div>
<div class="sep" style="left:279px;top:735px;height:17px"></div>
<div class="sep" style="left:347px;top:735px;height:17px"></div>
<div class="sep" style="left:391px;top:735px;height:17px"></div>
<div class="sep" style="left:435px;top:735px;height:17px"></div>
<div class="sep" style="left:479px;top:735px;height:17px"></div>
<div class="sep" style="left:535px;top:735px;height:17px"></div>
<div class="sep" style="left:579px;top:735px;height:17px"></div>
<div class="abs" style="left:191px;top:741px;font-size:10px;font-weight:bold;color:#e81123;line-height:12px">99</div>
<div class="abs" style="left:253px;top:741px;font-size:10px;font-weight:bold;color:#e81123;line-height:12px">11</div>
<svg class="abs" style="left:1050px;top:736px" width="13" height="15" viewBox="0 0 13 15"><path d="M4.500 6.500 V4 a2.200 2.600 0 0 1 4.400 0 V6.500" fill="none" stroke="#d89a10" stroke-width="1.100"/><path d="M2.100 4.300 H11.300 L12 13.700 H1.200 Z" fill="#fdd000" stroke="#dca318" stroke-width=".9" stroke-linejoin="round"/><path d="M4.500 4.500 V6.300 M8.900 4.500 V6.300" stroke="#d89a10" stroke-width="1.100"/></svg>
<div class="abs" style="left:1068px;top:737px;font-size:12px;line-height:14px">市场</div>
<svg class="abs" style="left:1104px;top:738px" width="17" height="11" viewBox="0 0 17 11"><circle cx="8.500" cy="5.500" r="1.100" fill="none" stroke="#1a6ab0" stroke-width="1"/><path d="M5.700 2.700 a4 4 0 0 0 0 5.600 M11.300 2.700 a4 4 0 0 1 0 5.600 M3.200 0.900 a6.800 6.800 0 0 0 0 9.200 M13.800 0.900 a6.800 6.800 0 0 1 0 9.200" fill="none" stroke="#1a6ab0" stroke-width="1.150"/></svg>
<div class="abs" style="left:1124px;top:737px;font-size:12px;line-height:14px">信号</div>
<svg class="abs" style="left:1160px;top:736px" width="17" height="15" viewBox="0 0 17 15"><path d="M4.500 10 a3 3 0 0 1 0 -6 a4.500 4.500 0 0 1 8.500 1 a2.600 2.600 0 0 1 -0.500 5 z" fill="#d8ecff" stroke="#2a7fd0" stroke-width="1.2"/><path d="M8.500 10 v3 M5.500 13.500 h6" stroke="#2a7fd0" stroke-width="1.2"/></svg>
<div class="abs" style="left:1180.5px;top:737px;font-size:12.4px;line-height:14px;transform:scaleX(.86);transform-origin:left center">VPS</div>
<svg class="abs" style="left:1214px;top:735px" width="17" height="17" viewBox="0 0 17 17"><g transform="translate(.5 .5)"><path d="M5 .5v2.500M7 .5v2.500M9 .5v2.500M11 .5v2.500M5 13v2.500M7 13v2.500M9 13v2.500M11 13v2.500M.5 5h2.500M.5 7h2.500M.5 9h2.500M.5 11h2.500M13 5h2.500M13 7h2.500M13 9h2.500M13 11h2.500" stroke="#0a64b4" stroke-width="1"/><rect x="3.400" y="3.400" width="9.200" height="9.200" rx="2" fill="#c6e6ff" stroke="#0a64b4" stroke-width="1.400"/></g></svg>
<div class="abs" style="left:1234px;top:737px;font-size:12px;line-height:14px">测试</div>
<div class="abs" style="left:0;top:758px;width:1267px;height:1px;background:#a0a0a0"></div>
<div class="abs" style="left:0;top:759px;width:1267px;height:3px;background:#f2f2f2"></div>
<div class="abs" style="left:543px;top:760px;width:1px;height:2px;background:#555"></div>
<div class="abs" style="left:622px;top:760px;width:1px;height:2px;background:#555"></div>
<div class="abs" style="left:736px;top:760px;width:1px;height:2px;background:#555"></div>
<div class="abs" style="left:818px;top:760px;width:1px;height:2px;background:#555"></div>
<div class="abs" style="left:898px;top:760px;width:1px;height:2px;background:#555"></div>
<div class="abs" style="left:977px;top:760px;width:1px;height:2px;background:#555"></div>
<div class="abs" style="left:1057px;top:760px;width:1px;height:2px;background:#555"></div>
<div class="abs" style="left:1136px;top:760px;width:1px;height:2px;background:#555"></div>
<div class="abs" style="left:1222px;top:760px;width:1px;height:2px;background:#555"></div>
<svg class="abs" style="left:0;top:0;pointer-events:none" width="1273" height="762" viewBox="0 0 1273 762" font-family="Liberation Sans, sans-serif">
<text x="123.0" y="136" font-size="37.5" fill="#fff" fill-opacity=".12" stroke="#5c5c5c" stroke-opacity=".34" stroke-width="1" text-anchor="middle" transform="rotate(-32.5 123.0 122)">EAHub.cn</text>
<text x="373.3" y="136" font-size="37.5" fill="#fff" fill-opacity=".12" stroke="#5c5c5c" stroke-opacity=".34" stroke-width="1" text-anchor="middle" transform="rotate(-32.5 373.3 122)">EAHub.cn</text>
<text x="623.6" y="136" font-size="37.5" fill="#fff" fill-opacity=".12" stroke="#5c5c5c" stroke-opacity=".34" stroke-width="1" text-anchor="middle" transform="rotate(-32.5 623.6 122)">EAHub.cn</text>
<text x="873.9000000000001" y="136" font-size="37.5" fill="#fff" fill-opacity=".12" stroke="#5c5c5c" stroke-opacity=".34" stroke-width="1" text-anchor="middle" transform="rotate(-32.5 873.9000000000001 122)">EAHub.cn</text>
<text x="1124.2" y="136" font-size="37.5" fill="#fff" fill-opacity=".12" stroke="#5c5c5c" stroke-opacity=".34" stroke-width="1" text-anchor="middle" transform="rotate(-32.5 1124.2 122)">EAHub.cn</text>
<text x="123.0" y="385" font-size="37.5" fill="#fff" fill-opacity=".12" stroke="#5c5c5c" stroke-opacity=".34" stroke-width="1" text-anchor="middle" transform="rotate(-32.5 123.0 371)">EAHub.cn</text>
<text x="373.3" y="385" font-size="37.5" fill="#fff" fill-opacity=".12" stroke="#5c5c5c" stroke-opacity=".34" stroke-width="1" text-anchor="middle" transform="rotate(-32.5 373.3 371)">EAHub.cn</text>
<text x="623.6" y="385" font-size="37.5" fill="#fff" fill-opacity=".12" stroke="#5c5c5c" stroke-opacity=".34" stroke-width="1" text-anchor="middle" transform="rotate(-32.5 623.6 371)">EAHub.cn</text>
<text x="873.9000000000001" y="385" font-size="37.5" fill="#fff" fill-opacity=".12" stroke="#5c5c5c" stroke-opacity=".34" stroke-width="1" text-anchor="middle" transform="rotate(-32.5 873.9000000000001 371)">EAHub.cn</text>
<text x="1124.2" y="385" font-size="37.5" fill="#fff" fill-opacity=".12" stroke="#5c5c5c" stroke-opacity=".34" stroke-width="1" text-anchor="middle" transform="rotate(-32.5 1124.2 371)">EAHub.cn</text>
<text x="123.0" y="634" font-size="37.5" fill="#fff" fill-opacity=".12" stroke="#5c5c5c" stroke-opacity=".34" stroke-width="1" text-anchor="middle" transform="rotate(-32.5 123.0 620)">EAHub.cn</text>
<text x="373.3" y="634" font-size="37.5" fill="#fff" fill-opacity=".12" stroke="#5c5c5c" stroke-opacity=".34" stroke-width="1" text-anchor="middle" transform="rotate(-32.5 373.3 620)">EAHub.cn</text>
<text x="623.6" y="634" font-size="37.5" fill="#fff" fill-opacity=".12" stroke="#5c5c5c" stroke-opacity=".34" stroke-width="1" text-anchor="middle" transform="rotate(-32.5 623.6 620)">EAHub.cn</text>
<text x="873.9000000000001" y="634" font-size="37.5" fill="#fff" fill-opacity=".12" stroke="#5c5c5c" stroke-opacity=".34" stroke-width="1" text-anchor="middle" transform="rotate(-32.5 873.9000000000001 620)">EAHub.cn</text>
<text x="1124.2" y="634" font-size="37.5" fill="#fff" fill-opacity=".12" stroke="#5c5c5c" stroke-opacity=".34" stroke-width="1" text-anchor="middle" transform="rotate(-32.5 1124.2 620)">EAHub.cn</text>
<defs><linearGradient id="rg" x1="0" y1="0" x2="0.3" y2="1"><stop offset="0" stop-color="#f79ad6"/><stop offset=".55" stop-color="#e2a6e6"/><stop offset="1" stop-color="#9fdcfa"/></linearGradient><linearGradient id="tg" x1="0" y1="0" x2="1" y2="0"><stop offset="0" stop-color="#86b8ee"/><stop offset=".6" stop-color="#9ab0ea"/><stop offset="1" stop-color="#d09ad6"/></linearGradient></defs>
<defs><radialGradient id="bg" cx=".5" cy=".5" r=".5"><stop offset="0" stop-color="#8fa6a8" stop-opacity=".42"/><stop offset="1" stop-color="#686c6c" stop-opacity=".5"/></radialGradient></defs>
<circle cx="1095.5" cy="527" r="28.3" fill="url(#bg)" stroke="url(#rg)" stroke-width="1.6"/>
<text x="1094" y="537" font-size="24.5" font-weight="bold" fill="url(#tg)" fill-opacity=".9" text-anchor="middle" textLength="23" lengthAdjust="spacingAndGlyphs">AI</text>
<path d="M1104.5 513.7 h10 M1109.5 508.8 v9.8" stroke="#8fc0ea" stroke-opacity=".8" stroke-width="1.8"/>
</svg>
</body></html>
